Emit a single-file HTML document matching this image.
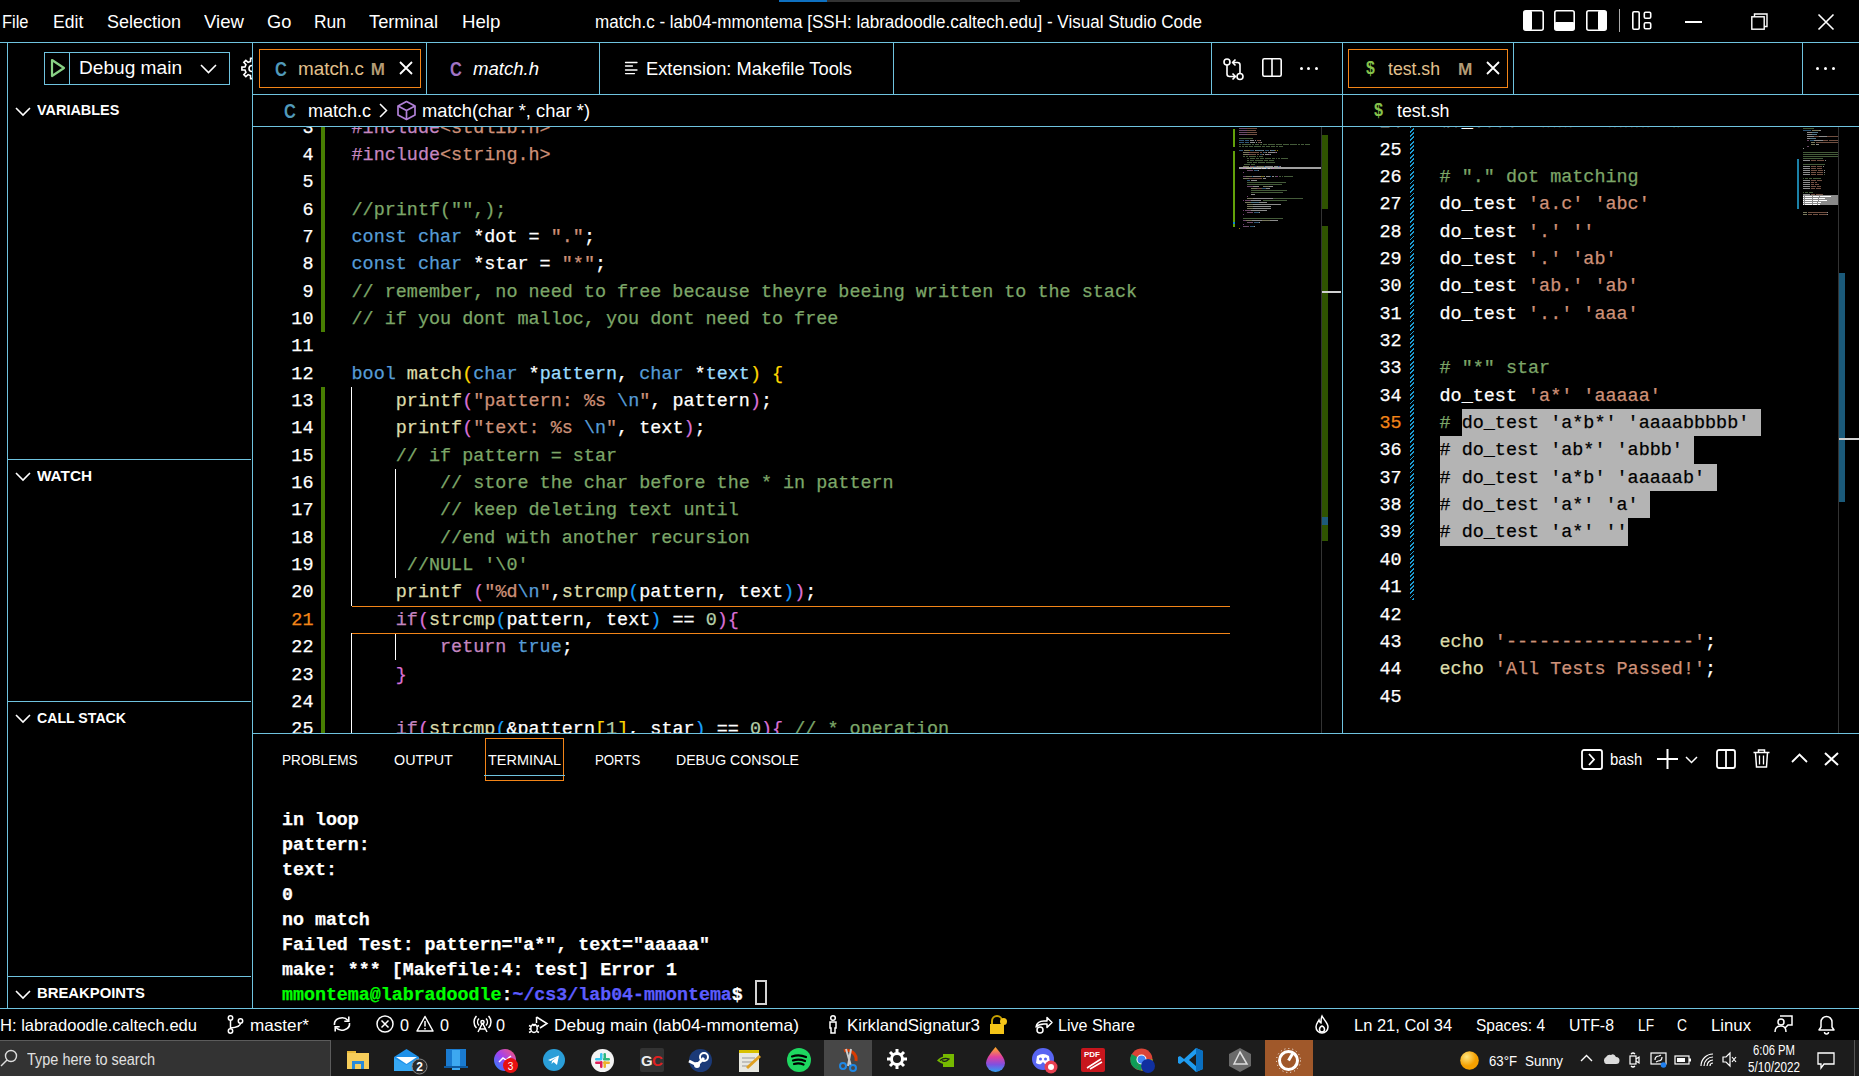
<!DOCTYPE html><html><head><meta charset="utf-8"><style>
html,body{margin:0;padding:0;background:#000;}
body{width:1859px;height:1076px;position:relative;overflow:hidden;}
.t{position:absolute;white-space:pre;line-height:1;}
.r{position:absolute;}
svg.r{overflow:visible;}
.m{position:absolute;white-space:pre;font-family:"Liberation Mono",monospace;line-height:1;color:#fff;-webkit-text-stroke:0.25px currentColor;}
.tb{font-size:18.3px;font-weight:700;}
</style></head><body>
<div class="r" style="left:779.00px;top:0.00px;width:48.00px;height:1.50px;background:#0E70C0;"></div>
<div class="r" style="left:827.00px;top:0.00px;width:193.00px;height:1.50px;background:#333;"></div>
<div class="t" style="left:2.00px;top:12.94px;font-size:18.50px;color:#fff;font-family:'Liberation Sans', sans-serif;font-weight:400;transform:scaleX(0.8897);transform-origin:0 0;">File</div>
<div class="t" style="left:52.70px;top:12.94px;font-size:18.50px;color:#fff;font-family:'Liberation Sans', sans-serif;font-weight:400;transform:scaleX(0.9495);transform-origin:0 0;">Edit</div>
<div class="t" style="left:107.00px;top:12.94px;font-size:18.50px;color:#fff;font-family:'Liberation Sans', sans-serif;font-weight:400;transform:scaleX(0.9721);transform-origin:0 0;">Selection</div>
<div class="t" style="left:204.00px;top:12.94px;font-size:18.50px;color:#fff;font-family:'Liberation Sans', sans-serif;font-weight:400;transform:scaleX(1.0057);transform-origin:0 0;">View</div>
<div class="t" style="left:266.70px;top:12.94px;font-size:18.50px;color:#fff;font-family:'Liberation Sans', sans-serif;font-weight:400;transform:scaleX(0.9839);transform-origin:0 0;">Go</div>
<div class="t" style="left:314.00px;top:12.94px;font-size:18.50px;color:#fff;font-family:'Liberation Sans', sans-serif;font-weight:400;transform:scaleX(0.9426);transform-origin:0 0;">Run</div>
<div class="t" style="left:369.00px;top:12.94px;font-size:18.50px;color:#fff;font-family:'Liberation Sans', sans-serif;font-weight:400;transform:scaleX(0.9867);transform-origin:0 0;">Terminal</div>
<div class="t" style="left:461.70px;top:12.94px;font-size:18.50px;color:#fff;font-family:'Liberation Sans', sans-serif;font-weight:400;transform:scaleX(1.0074);transform-origin:0 0;">Help</div>
<div class="t" style="left:595.00px;top:13.78px;font-size:17.50px;color:#fff;font-family:'Liberation Sans', sans-serif;font-weight:400;transform:scaleX(0.9740);transform-origin:0 0;">match.c - lab04-mmontema [SSH: labradoodle.caltech.edu] - Visual Studio Code</div>
<svg class="r" style="left:1523.00px;top:10.00px;" width="21" height="21" viewBox="0 0 21 21"><rect x="0.8" y="0.8" width="19.4" height="19.4" rx="2" fill="none" stroke="#fff" stroke-width="1.6"/><rect x="1" y="1" width="8" height="19" rx="1" fill="#fff"/></svg>
<svg class="r" style="left:1554.00px;top:10.00px;" width="21" height="21" viewBox="0 0 21 21"><rect x="0.8" y="0.8" width="19.4" height="19.4" rx="2" fill="none" stroke="#fff" stroke-width="1.6"/><rect x="1" y="12" width="19" height="8" rx="1" fill="#fff"/></svg>
<svg class="r" style="left:1586.00px;top:10.00px;" width="21" height="21" viewBox="0 0 21 21"><rect x="0.8" y="0.8" width="19.4" height="19.4" rx="2" fill="none" stroke="#fff" stroke-width="1.6"/><rect x="12" y="1" width="8" height="19" rx="1" fill="#fff"/></svg>
<div class="r" style="left:1618.50px;top:9.00px;width:1.50px;height:23.00px;background:#aaa;"></div>
<svg class="r" style="left:1632.00px;top:11.00px;" width="20" height="19" viewBox="0 0 20 19"><rect x="0.8" y="0.8" width="6.4" height="17.4" rx="1.2" fill="none" stroke="#fff" stroke-width="1.6"/><rect x="12.3" y="1.3" width="6.4" height="6" rx="1.2" fill="none" stroke="#fff" stroke-width="1.6"/><rect x="12.3" y="11.8" width="6.4" height="6" rx="1.2" fill="none" stroke="#fff" stroke-width="1.6"/></svg>
<div class="r" style="left:1685.00px;top:21.00px;width:17.00px;height:1.60px;background:#fff;"></div>
<svg class="r" style="left:1751.00px;top:13.00px;" width="19" height="18" viewBox="0 0 19 18"><rect x="0.8" y="3.8" width="12.4" height="12.4" fill="none" stroke="#fff" stroke-width="1.4"/><path d="M3.5 3.8V1H16V13.5H13.2" fill="none" stroke="#fff" stroke-width="1.4"/></svg>
<svg class="r" style="left:1818.00px;top:14.00px;" width="16" height="16" viewBox="0 0 16 16"><path d="M0.5 0.5L15.5 15.5M15.5 0.5L0.5 15.5" stroke="#fff" stroke-width="1.6"/></svg>
<div class="r" style="left:0.00px;top:42.00px;width:1859.00px;height:1.00px;background:#6FC3DF;"></div>
<div class="r" style="left:7.00px;top:42.00px;width:1.00px;height:966.00px;background:#6FC3DF;"></div>
<div class="r" style="left:252.00px;top:42.00px;width:1.00px;height:966.00px;background:#6FC3DF;"></div>
<div class="r" style="left:0.00px;top:1008.00px;width:1859.00px;height:1.00px;background:#6FC3DF;"></div>
<div class="r" style="left:44.00px;top:52.00px;width:186.00px;height:33.00px;box-sizing:border-box;border:1px solid #6FC3DF;"></div>
<div class="r" style="left:69.00px;top:53.00px;width:1.00px;height:31.00px;background:#6FC3DF;"></div>
<svg class="r" style="left:50.00px;top:58.00px;" width="16" height="20" viewBox="0 0 16 20"><path d="M2 2L14 10L2 18Z" fill="none" stroke="#89D185" stroke-width="2.2" stroke-linejoin="round"/></svg>
<div class="t" style="left:79.00px;top:59.04px;font-size:18.50px;color:#fff;font-family:'Liberation Sans', sans-serif;font-weight:400;transform:scaleX(1.0329);transform-origin:0 0;">Debug main</div>
<svg class="r" style="left:200.00px;top:64.00px;" width="17" height="10" viewBox="0 0 17 10"><path d="M1 1L8.5 8.5L16 1" fill="none" stroke="#fff" stroke-width="1.6"/></svg>
<div class="r" style="left:230px;top:55px;width:22px;height:30px;overflow:hidden">
<svg class="r" style="left:0.00px;top:0.00px;" width="30" height="30" viewBox="0 0 30 30"><g fill="none" stroke="#fff" stroke-width="1.6" stroke-linejoin="miter"><path d="M29.03 11.96 L32.10 12.10 L32.10 14.90 L29.03 15.04 L28.06 17.38 L30.13 19.66 L28.16 21.63 L25.88 19.56 L23.54 20.53 L23.40 23.60 L20.60 23.60 L20.46 20.53 L18.12 19.56 L15.84 21.63 L13.87 19.66 L15.94 17.38 L14.97 15.04 L11.90 14.90 L11.90 12.10 L14.97 11.96 L15.94 9.62 L13.87 7.34 L15.84 5.37 L18.12 7.44 L20.46 6.47 L20.60 3.40 L23.40 3.40 L23.54 6.47 L25.88 7.44 L28.16 5.37 L30.13 7.34 L28.06 9.62Z"/><circle cx="22" cy="13.5" r="3"/></g></svg>
</div>
<svg class="r" style="left:15.00px;top:106.50px;" width="16" height="9" viewBox="0 0 16 9"><path d="M1 1L8 8L15 1" fill="none" stroke="#fff" stroke-width="1.6"/></svg>
<div class="t" style="left:37.40px;top:103.22px;font-size:14.50px;color:#fff;font-family:'Liberation Sans', sans-serif;font-weight:700;transform:scaleX(0.9949);transform-origin:0 0;">VARIABLES</div>
<div class="r" style="left:8.00px;top:459.00px;width:243.00px;height:1.00px;background:#6FC3DF;"></div>
<svg class="r" style="left:15.00px;top:472.00px;" width="16" height="9" viewBox="0 0 16 9"><path d="M1 1L8 8L15 1" fill="none" stroke="#fff" stroke-width="1.6"/></svg>
<div class="t" style="left:37.40px;top:468.72px;font-size:14.50px;color:#fff;font-family:'Liberation Sans', sans-serif;font-weight:700;transform:scaleX(1.0566);transform-origin:0 0;">WATCH</div>
<div class="r" style="left:8.00px;top:701.00px;width:243.00px;height:1.00px;background:#6FC3DF;"></div>
<svg class="r" style="left:15.00px;top:714.00px;" width="16" height="9" viewBox="0 0 16 9"><path d="M1 1L8 8L15 1" fill="none" stroke="#fff" stroke-width="1.6"/></svg>
<div class="t" style="left:37.40px;top:710.72px;font-size:14.50px;color:#fff;font-family:'Liberation Sans', sans-serif;font-weight:700;transform:scaleX(0.9750);transform-origin:0 0;">CALL STACK</div>
<div class="r" style="left:8.00px;top:976.00px;width:243.00px;height:1.00px;background:#6FC3DF;"></div>
<svg class="r" style="left:15.00px;top:989.70px;" width="16" height="9" viewBox="0 0 16 9"><path d="M1 1L8 8L15 1" fill="none" stroke="#fff" stroke-width="1.6"/></svg>
<div class="t" style="left:37.40px;top:986.42px;font-size:14.50px;color:#fff;font-family:'Liberation Sans', sans-serif;font-weight:700;transform:scaleX(1.0231);transform-origin:0 0;">BREAKPOINTS</div>
<div class="r" style="left:253.00px;top:94.00px;width:1089.00px;height:1.00px;background:#6FC3DF;"></div>
<div class="r" style="left:253.00px;top:126.00px;width:1089.00px;height:1.00px;background:#6FC3DF;"></div>
<div class="r" style="left:426.00px;top:42.00px;width:1.00px;height:52.00px;background:#6FC3DF;"></div>
<div class="r" style="left:599.00px;top:42.00px;width:1.00px;height:52.00px;background:#6FC3DF;"></div>
<div class="r" style="left:893.00px;top:42.00px;width:1.00px;height:52.00px;background:#6FC3DF;"></div>
<div class="r" style="left:1211.00px;top:42.00px;width:1.00px;height:52.00px;background:#6FC3DF;"></div>
<div class="r" style="left:1342.00px;top:42.00px;width:1.00px;height:691.00px;background:#6FC3DF;"></div>
<div class="r" style="left:259.00px;top:49.00px;width:162.00px;height:39.00px;box-sizing:border-box;border:1px solid #F38518;"></div>
<div class="t" style="left:275.20px;top:58.57px;font-size:20.00px;color:#519ABA;font-family:'Liberation Sans', sans-serif;font-weight:700;transform:scaleX(0.8194);transform-origin:0 0;">C</div>
<div class="t" style="left:298.00px;top:60.34px;font-size:18.50px;color:#E2C08D;font-family:'Liberation Sans', sans-serif;font-weight:400;transform:scaleX(1.0193);transform-origin:0 0;">match.c</div>
<div class="t" style="left:370.80px;top:61.11px;font-size:17.00px;color:#B39B74;font-family:'Liberation Sans', sans-serif;font-weight:700;">M</div>
<svg class="r" style="left:399.00px;top:61.00px;" width="14" height="14" viewBox="0 0 14 14"><path d="M1 1L13 13M13 1L1 13" stroke="#fff" stroke-width="1.8"/></svg>
<div class="t" style="left:450.00px;top:58.57px;font-size:20.00px;color:#A074C4;font-family:'Liberation Sans', sans-serif;font-weight:700;transform:scaleX(0.8194);transform-origin:0 0;">C</div>
<div class="t" style="left:473.00px;top:60.34px;font-size:18.50px;color:#fff;font-family:'Liberation Sans', sans-serif;font-weight:400;font-style:italic;transform:scaleX(1.0035);transform-origin:0 0;">match.h</div>
<svg class="r" style="left:625.00px;top:61.00px;" width="13" height="14" viewBox="0 0 13 14"><path d="M0.5 1.5H12M0.5 5H7.5M0.5 9H12M0.5 12.6H9.5" stroke="#fff" stroke-width="1.3" stroke-linecap="round"/></svg>
<div class="t" style="left:646.00px;top:60.34px;font-size:18.50px;color:#fff;font-family:'Liberation Sans', sans-serif;font-weight:400;transform:scaleX(0.9885);transform-origin:0 0;">Extension: Makefile Tools</div>
<svg class="r" style="left:1220.00px;top:55.00px;" width="26" height="28" viewBox="0 0 26 28"><g fill="none" stroke="#fff" stroke-width="1.6" stroke-linejoin="round"><circle cx="7" cy="7" r="3"/><circle cx="20" cy="21.5" r="3"/><path d="M7 10V19Q7 21.5 9.5 21.5H15M12.5 18.5L15.5 21.5L12.5 24.5"/><path d="M20 18.5V10Q20 7.5 17.5 7.5H12.5M15.5 4.5L12.5 7.5L15.5 10.5"/></g></svg>
<svg class="r" style="left:1262.00px;top:58.00px;" width="20" height="19" viewBox="0 0 20 19"><rect x="0.8" y="0.8" width="18.4" height="17.4" rx="1.5" fill="none" stroke="#fff" stroke-width="1.6"/><path d="M10 1V18" stroke="#fff" stroke-width="1.6"/></svg>
<div class="r" style="left:1299.50px;top:67.00px;width:3.00px;height:3.00px;background:#fff;border-radius:50%;"></div>
<div class="r" style="left:1307.00px;top:67.00px;width:3.00px;height:3.00px;background:#fff;border-radius:50%;"></div>
<div class="r" style="left:1314.50px;top:67.00px;width:3.00px;height:3.00px;background:#fff;border-radius:50%;"></div>
<div class="t" style="left:284.20px;top:100.57px;font-size:20.00px;color:#519ABA;font-family:'Liberation Sans', sans-serif;font-weight:700;transform:scaleX(0.8194);transform-origin:0 0;">C</div>
<div class="t" style="left:308.00px;top:102.34px;font-size:18.50px;color:#fff;font-family:'Liberation Sans', sans-serif;font-weight:400;transform:scaleX(0.9730);transform-origin:0 0;">match.c</div>
<svg class="r" style="left:379.00px;top:103.00px;" width="9" height="15" viewBox="0 0 9 15"><path d="M1 1L7.5 7.5L1 14" fill="none" stroke="#fff" stroke-width="1.5"/></svg>
<svg class="r" style="left:396.00px;top:100.00px;" width="21" height="21" viewBox="0 0 21 21"><g fill="none" stroke="#B180D7" stroke-width="1.7" stroke-linejoin="round"><path d="M10.5 1.5L19 6V15L10.5 19.5L2 15V6Z"/><path d="M2 6L10.5 10.5L19 6M10.5 10.5V19.5"/></g></svg>
<div class="t" style="left:422.00px;top:102.34px;font-size:18.50px;color:#fff;font-family:'Liberation Sans', sans-serif;font-weight:400;transform:scaleX(0.9903);transform-origin:0 0;">match(char *, char *)</div>
<div class="r" style="left:1343.00px;top:94.00px;width:516.00px;height:1.00px;background:#6FC3DF;"></div>
<div class="r" style="left:1343.00px;top:126.00px;width:516.00px;height:1.00px;background:#6FC3DF;"></div>
<div class="r" style="left:1513.00px;top:42.00px;width:1.00px;height:52.00px;background:#6FC3DF;"></div>
<div class="r" style="left:1802.00px;top:42.00px;width:1.00px;height:52.00px;background:#6FC3DF;"></div>
<div class="r" style="left:1348.00px;top:49.00px;width:160.00px;height:39.00px;box-sizing:border-box;border:1px solid #F38518;"></div>
<div class="t" style="left:1365.70px;top:58.41px;font-size:19.00px;color:#86C24B;font-family:'Liberation Sans', sans-serif;font-weight:700;transform:scaleX(0.8345);transform-origin:0 0;">$</div>
<div class="t" style="left:1388.00px;top:60.34px;font-size:18.50px;color:#E2C08D;font-family:'Liberation Sans', sans-serif;font-weight:400;transform:scaleX(0.9544);transform-origin:0 0;">test.sh</div>
<div class="t" style="left:1457.80px;top:61.11px;font-size:17.00px;color:#B39B74;font-family:'Liberation Sans', sans-serif;font-weight:700;transform:scaleX(1.0144);transform-origin:0 0;">M</div>
<svg class="r" style="left:1486.00px;top:61.00px;" width="14" height="14" viewBox="0 0 14 14"><path d="M1 1L13 13M13 1L1 13" stroke="#fff" stroke-width="1.8"/></svg>
<div class="r" style="left:1815.50px;top:67.00px;width:3.00px;height:3.00px;background:#fff;border-radius:50%;"></div>
<div class="r" style="left:1823.50px;top:67.00px;width:3.00px;height:3.00px;background:#fff;border-radius:50%;"></div>
<div class="r" style="left:1831.50px;top:67.00px;width:3.00px;height:3.00px;background:#fff;border-radius:50%;"></div>
<div class="t" style="left:1374.00px;top:100.41px;font-size:19.00px;color:#86C24B;font-family:'Liberation Sans', sans-serif;font-weight:700;transform:scaleX(0.8535);transform-origin:0 0;">$</div>
<div class="t" style="left:1396.50px;top:102.34px;font-size:18.50px;color:#fff;font-family:'Liberation Sans', sans-serif;font-weight:400;transform:scaleX(0.9636);transform-origin:0 0;">test.sh</div>
<div class="r" style="left:253.00px;top:733.00px;width:1606.00px;height:1.00px;background:#6FC3DF;"></div>
<div class="t" style="left:282.40px;top:751.88px;font-size:15.50px;color:#fff;font-family:'Liberation Sans', sans-serif;font-weight:400;transform:scaleX(0.8780);transform-origin:0 0;">PROBLEMS</div>
<div class="t" style="left:393.70px;top:751.88px;font-size:15.50px;color:#fff;font-family:'Liberation Sans', sans-serif;font-weight:400;transform:scaleX(0.9230);transform-origin:0 0;">OUTPUT</div>
<div class="t" style="left:488.00px;top:751.88px;font-size:15.50px;color:#fff;font-family:'Liberation Sans', sans-serif;font-weight:400;transform:scaleX(0.9317);transform-origin:0 0;">TERMINAL</div>
<div class="t" style="left:595.40px;top:751.88px;font-size:15.50px;color:#fff;font-family:'Liberation Sans', sans-serif;font-weight:400;transform:scaleX(0.8533);transform-origin:0 0;">PORTS</div>
<div class="t" style="left:676.00px;top:751.88px;font-size:15.50px;color:#fff;font-family:'Liberation Sans', sans-serif;font-weight:400;transform:scaleX(0.9095);transform-origin:0 0;">DEBUG CONSOLE</div>
<div class="r" style="left:485.00px;top:738.00px;width:79.00px;height:43.00px;box-sizing:border-box;border:1px solid #F38518;"></div>
<div class="r" style="left:484.00px;top:775.00px;width:81.00px;height:1.00px;background:#6FC3DF;"></div>
<svg class="r" style="left:1581.00px;top:749.00px;" width="22" height="21" viewBox="0 0 22 21"><rect x="1" y="1" width="20" height="19" rx="2" fill="none" stroke="#fff" stroke-width="1.8"/><path d="M8 5L13 10.5L8 16" fill="none" stroke="#fff" stroke-width="1.8"/></svg>
<div class="t" style="left:1609.70px;top:751.11px;font-size:17.00px;color:#fff;font-family:'Liberation Sans', sans-serif;font-weight:400;transform:scaleX(0.8756);transform-origin:0 0;">bash</div>
<svg class="r" style="left:1657.00px;top:749.00px;" width="21" height="20" viewBox="0 0 21 20"><path d="M10.5 0V20M0 10H21" stroke="#fff" stroke-width="2"/></svg>
<svg class="r" style="left:1685.00px;top:756.00px;" width="13" height="8" viewBox="0 0 13 8"><path d="M1 1L6.5 6.5L12 1" fill="none" stroke="#fff" stroke-width="1.5"/></svg>
<svg class="r" style="left:1716.00px;top:749.00px;" width="19" height="19" viewBox="0 0 19 19"><rect x="1" y="1" width="18" height="18" rx="2" fill="none" stroke="#fff" stroke-width="1.8"/><path d="M10 1V19" stroke="#fff" stroke-width="1.8"/></svg>
<svg class="r" style="left:1753.00px;top:749.00px;" width="17" height="19" viewBox="0 0 17 19"><g fill="none" stroke="#fff" stroke-width="1.5"><path d="M0.5 3.5H16.5M5.5 3.5V1H11.5V3.5M2.5 3.5L3.5 18H13.5L14.5 3.5"/><path d="M6.5 6.5V15.5M10.5 6.5V15.5" stroke-width="1.3"/></g></svg>
<svg class="r" style="left:1791.00px;top:753.00px;" width="17" height="10" viewBox="0 0 17 10"><path d="M1 9L8.5 1.5L16 9" fill="none" stroke="#fff" stroke-width="1.8"/></svg>
<svg class="r" style="left:1824.00px;top:752.00px;" width="15" height="14" viewBox="0 0 15 14"><path d="M1 1L14 13M14 1L1 13" stroke="#fff" stroke-width="2"/></svg>
<div class="m tb" style="left:282px;top:810.98px">in loop</div>
<div class="m tb" style="left:282px;top:835.98px">pattern:</div>
<div class="m tb" style="left:282px;top:860.98px">text:</div>
<div class="m tb" style="left:282px;top:885.98px">0</div>
<div class="m tb" style="left:282px;top:910.98px">no match</div>
<div class="m tb" style="left:282px;top:935.98px">Failed Test: pattern=&quot;a*&quot;, text=&quot;aaaaa&quot;</div>
<div class="m tb" style="left:282px;top:960.98px">make: *** [Makefile:4: test] Error 1</div>
<div class="m tb" style="left:282px;top:985.98px"><span style="color:#00FF00">mmontema@labradoodle</span>:<span style="color:#5C5CFF">~/cs3/lab04-mmontema</span>$ </div>
<div class="r" style="left:754.50px;top:980.00px;width:12.00px;height:24.50px;box-sizing:border-box;border:2px solid #d4d4d4;"></div>
<div class="t" style="left:0.00px;top:1016.73px;font-size:16.50px;color:#fff;font-family:'Liberation Sans', sans-serif;font-weight:400;transform:scaleX(1.0037);transform-origin:0 0;">H: labradoodle.caltech.edu</div>
<div class="t" style="left:250.00px;top:1016.73px;font-size:16.50px;color:#fff;font-family:'Liberation Sans', sans-serif;font-weight:400;transform:scaleX(1.0380);transform-origin:0 0;">master*</div>
<div class="t" style="left:554.00px;top:1016.73px;font-size:16.50px;color:#fff;font-family:'Liberation Sans', sans-serif;font-weight:400;transform:scaleX(1.0516);transform-origin:0 0;">Debug main (lab04-mmontema)</div>
<div class="t" style="left:400.00px;top:1016.73px;font-size:16.50px;color:#fff;font-family:'Liberation Sans', sans-serif;font-weight:400;transform:scaleX(0.9828);transform-origin:0 0;">0</div>
<div class="t" style="left:440.00px;top:1016.73px;font-size:16.50px;color:#fff;font-family:'Liberation Sans', sans-serif;font-weight:400;transform:scaleX(0.9828);transform-origin:0 0;">0</div>
<div class="t" style="left:496.00px;top:1016.73px;font-size:16.50px;color:#fff;font-family:'Liberation Sans', sans-serif;font-weight:400;transform:scaleX(0.9828);transform-origin:0 0;">0</div>
<div class="t" style="left:847.00px;top:1016.73px;font-size:16.50px;color:#fff;font-family:'Liberation Sans', sans-serif;font-weight:400;transform:scaleX(1.0210);transform-origin:0 0;">KirklandSignatur3</div>
<div class="t" style="left:1058.00px;top:1016.73px;font-size:16.50px;color:#fff;font-family:'Liberation Sans', sans-serif;font-weight:400;transform:scaleX(0.9763);transform-origin:0 0;">Live Share</div>
<div class="t" style="left:1354.00px;top:1016.73px;font-size:16.50px;color:#fff;font-family:'Liberation Sans', sans-serif;font-weight:400;">Ln 21, Col 34</div>
<div class="t" style="left:1476.00px;top:1016.73px;font-size:16.50px;color:#fff;font-family:'Liberation Sans', sans-serif;font-weight:400;transform:scaleX(0.9408);transform-origin:0 0;">Spaces: 4</div>
<div class="t" style="left:1569.00px;top:1016.73px;font-size:16.50px;color:#fff;font-family:'Liberation Sans', sans-serif;font-weight:400;transform:scaleX(0.9620);transform-origin:0 0;">UTF-8</div>
<div class="t" style="left:1638.00px;top:1016.73px;font-size:16.50px;color:#fff;font-family:'Liberation Sans', sans-serif;font-weight:400;transform:scaleX(0.8324);transform-origin:0 0;">LF</div>
<div class="t" style="left:1677.00px;top:1016.73px;font-size:16.50px;color:#fff;font-family:'Liberation Sans', sans-serif;font-weight:400;transform:scaleX(0.8418);transform-origin:0 0;">C</div>
<div class="t" style="left:1711.00px;top:1016.73px;font-size:16.50px;color:#fff;font-family:'Liberation Sans', sans-serif;font-weight:400;transform:scaleX(1.0143);transform-origin:0 0;">Linux</div>
<svg class="r" style="left:227.00px;top:1015.00px;" width="17" height="19" viewBox="0 0 17 19"><g fill="none" stroke="#fff" stroke-width="1.5"><circle cx="3.5" cy="3" r="2.2"/><circle cx="3.5" cy="16" r="2.2"/><circle cx="13.5" cy="6" r="2.2"/><path d="M3.5 5.2V13.8M13.5 8.2Q13.5 12 3.5 13"/></g></svg>
<svg class="r" style="left:332.00px;top:1016.00px;" width="20" height="16" viewBox="0 0 20 16"><g fill="none" stroke="#fff" stroke-width="1.6"><path d="M2.5 9A7.5 6.5 0 0 1 16 4.5"/><path d="M17.5 7A7.5 6.5 0 0 1 4 11.5"/><path d="M16.8 0.5V5.2H12.3" stroke-linejoin="miter"/><path d="M3.2 15.5V10.8H7.7"/></g></svg>
<svg class="r" style="left:376.00px;top:1015.00px;" width="18" height="18" viewBox="0 0 18 18"><g fill="none" stroke="#fff" stroke-width="1.5"><circle cx="9" cy="9" r="8"/><path d="M5.5 5.5L12.5 12.5M12.5 5.5L5.5 12.5"/></g></svg>
<svg class="r" style="left:416.00px;top:1015.00px;" width="18" height="17" viewBox="0 0 18 17"><g fill="none" stroke="#fff" stroke-width="1.5"><path d="M9 1.5L17 16H1Z" stroke-linejoin="round"/><path d="M9 6V11.5M9 13V14.5"/></g></svg>
<svg class="r" style="left:474.00px;top:1015.00px;" width="17" height="18" viewBox="0 0 17 18"><g fill="none" stroke="#fff" stroke-width="1.5"><path d="M8.5 8L4 17M8.5 8L13 17M5.5 14H11.5"/><circle cx="8.5" cy="7" r="1.6"/><path d="M5 3.5A5 5 0 0 0 5 10.5M12 3.5A5 5 0 0 1 12 10.5M2.5 1A8.5 8.5 0 0 0 2.5 13M14.5 1A8.5 8.5 0 0 1 14.5 13"/></g></svg>
<svg class="r" style="left:528.00px;top:1016.00px;" width="20" height="18" viewBox="0 0 20 18"><g fill="none" stroke="#fff" stroke-width="1.5"><path d="M8.5 1L19 7.5L12 12"/><path d="M8.5 1V7"/><ellipse cx="6" cy="12.5" rx="3.2" ry="4"/><path d="M1 9.5L3 10.5M1 13H3M1 16.5L3 15.5M11 9.5L9 10.5M11 16.5L9 15.5M4 8L6 9.5L8 8"/></g></svg>
<svg class="r" style="left:828.00px;top:1015.00px;" width="10" height="19" viewBox="0 0 10 19"><g fill="none" stroke="#fff" stroke-width="1.5"><circle cx="5" cy="3" r="2.3"/><path d="M2 7H8V13H7V18H3V13H2Z"/></g></svg>
<svg class="r" style="left:989.00px;top:1016.00px;" width="19" height="18" viewBox="0 0 19 18"><path d="M3 8V5A5 5 0 0 1 13 5V8" fill="none" stroke="#C8A200" stroke-width="2"/><rect x="1" y="8" width="14" height="10" fill="#F5C518"/><circle cx="14.5" cy="5.5" r="3.5" fill="#F5C518"/></svg>
<svg class="r" style="left:1034.00px;top:1016.00px;" width="19" height="18" viewBox="0 0 19 18"><g fill="none" stroke="#fff" stroke-width="1.5"><path d="M2 11Q3 5 10 5H13V1.5L18 6.5L13 11.5V8H10Q5 8 2 11Z" stroke-linejoin="round"/><circle cx="6" cy="14" r="3"/></g></svg>
<svg class="r" style="left:1315.00px;top:1015.00px;" width="14" height="18" viewBox="0 0 14 18"><g fill="none" stroke="#fff" stroke-width="1.5"><path d="M7 1C9 5 13 8 13 12A6 6 0 0 1 1 12C1 9 3 7 4 5C5 8 6 8 6 8C6 6 6 3 7 1Z"/><path d="M7 17A2.5 2.5 0 0 1 4.5 14.5C4.5 12 7 11 7 11C7 11 9.5 12 9.5 14.5A2.5 2.5 0 0 1 7 17Z"/></g></svg>
<svg class="r" style="left:1774.00px;top:1015.00px;" width="19" height="18" viewBox="0 0 19 18"><g fill="none" stroke="#fff" stroke-width="1.5"><path d="M6 1H18V10H14L11 13"/><circle cx="7" cy="7" r="3"/><path d="M1 17Q1 11 7 11Q12 11 12 17"/></g></svg>
<svg class="r" style="left:1818.00px;top:1015.00px;" width="17" height="19" viewBox="0 0 17 19"><g fill="none" stroke="#fff" stroke-width="1.5"><path d="M8.5 1.5A5.5 5.5 0 0 0 3 7V12L1 15H16L14 12V7A5.5 5.5 0 0 0 8.5 1.5Z" stroke-linejoin="round"/><path d="M6.5 17A2 2 0 0 0 10.5 17"/></g></svg>
<div class="r" style="left:0.00px;top:1040.00px;width:1859.00px;height:36.00px;background:#1C1C1C;"></div>
<div class="r" style="left:0.00px;top:1040.00px;width:331.00px;height:36.00px;background:#333333;box-sizing:border-box;border-top:1px solid #5c5c5c;border-right:1px solid #5c5c5c;"></div>
<div class="t" style="left:27.00px;top:1052.45px;font-size:16.00px;color:#e0e0e0;font-family:'Liberation Sans', sans-serif;font-weight:400;transform:scaleX(0.9050);transform-origin:0 0;">Type here to search</div>
<svg class="r" style="left:1.00px;top:1049.00px;" width="16" height="18" viewBox="0 0 16 18"><g fill="none" stroke="#ddd" stroke-width="1.4"><circle cx="10" cy="7" r="5.5"/><path d="M6 11L0 17"/></g></svg>
<div class="r" style="left:824.00px;top:1040.00px;width:48.00px;height:36.00px;background:#474747;"></div>
<div class="r" style="left:1265.00px;top:1040.00px;width:48.00px;height:36.00px;background:#A0582A;"></div>
<svg class="r" style="left:347.00px;top:1050.00px;" width="22" height="19" viewBox="0 0 22 19"><rect x="0" y="1" width="9" height="4" fill="#E8B838"/><rect x="0" y="3" width="22" height="16" fill="#F6CD5A"/><rect x="5" y="11" width="12" height="8" fill="#2A8AD8"/><rect x="8" y="14" width="6" height="5" fill="#F6CD5A"/></svg>
<svg class="r" style="left:394.00px;top:1049.00px;" width="25" height="22" viewBox="0 0 25 22"><path d="M0 8L12.5 0L25 8V22H0Z" fill="#1E90E8"/><path d="M2 8H23L12.5 15Z" fill="#fff"/><path d="M0 9L12.5 16L25 9V22H0Z" fill="#36A8F4"/></svg>
<svg class="r" style="left:411.00px;top:1058.00px;" width="17" height="17" viewBox="0 0 17 17"><circle cx="8.5" cy="8.5" r="7.5" fill="#2A2A2A" stroke="#888" stroke-width="1"/><text x="8.5" y="13" font-size="12" font-family="Liberation Sans" font-weight="700" fill="#fff" text-anchor="middle">2</text></svg>
<svg class="r" style="left:444.00px;top:1049.00px;" width="24" height="22" viewBox="0 0 24 22"><rect x="2" y="0" width="20" height="18" fill="#1A7BD0"/><rect x="8" y="1" width="8" height="20" fill="#3DA8F0"/><rect x="0" y="17" width="24" height="2" fill="#0E5AA0"/></svg>
<svg class="r" style="left:494.00px;top:1049.00px;" width="22" height="22" viewBox="0 0 22 22"><defs><linearGradient id="msg" x1="0" y1="1" x2="1" y2="0"><stop offset="0" stop-color="#1A8CFF"/><stop offset=".5" stop-color="#A040F0"/><stop offset="1" stop-color="#FF5A70"/></linearGradient></defs><circle cx="11" cy="11" r="11" fill="url(#msg)"/><path d="M5 13L9 9L12 11L17 7" stroke="#fff" stroke-width="1.5" fill="none"/></svg>
<svg class="r" style="left:503.00px;top:1058.00px;" width="15" height="15" viewBox="0 0 15 15"><circle cx="7.5" cy="7.5" r="7.5" fill="#E81010"/><text x="7.5" y="11.5" font-size="10" font-family="Liberation Sans" fill="#fff" text-anchor="middle">3</text></svg>
<svg class="r" style="left:543.00px;top:1049.00px;" width="22" height="22" viewBox="0 0 22 22"><circle cx="11" cy="11" r="11" fill="#2A9ED8"/><path d="M5 11L16 6.5L14 16L10.5 13L8.5 15L9 12L14 8L7.5 12Z" fill="#fff"/></svg>
<svg class="r" style="left:591.00px;top:1049.00px;" width="23" height="23" viewBox="0 0 23 23"><circle cx="11.5" cy="11.5" r="11.5" fill="#f4f4f4"/><rect x="9" y="4" width="2.5" height="7" rx="1.2" fill="#36C5F0"/><rect x="4" y="9" width="7" height="2.5" rx="1.2" fill="#36C5F0"/><rect x="12.5" y="4" width="2.5" height="7" rx="1.2" fill="#2EB67D"/><rect x="12" y="9" width="7" height="2.5" rx="1.2" fill="#2EB67D"/><rect x="12.5" y="12" width="2.5" height="7" rx="1.2" fill="#ECB22E"/><rect x="12" y="12.5" width="7" height="2.5" rx="1.2" fill="#ECB22E"/><rect x="9" y="12" width="2.5" height="7" rx="1.2" fill="#E01E5A"/><rect x="4" y="12.5" width="7" height="2.5" rx="1.2" fill="#E01E5A"/></svg>
<svg class="r" style="left:640.00px;top:1048.00px;" width="24" height="24" viewBox="0 0 24 24"><rect width="24" height="24" rx="2" fill="#333"/><text x="1" y="18" font-size="15" font-family="Liberation Sans" font-weight="700" fill="#eee">G</text><text x="12" y="18" font-size="15" font-family="Liberation Sans" font-weight="700" fill="#E02020">C</text></svg>
<svg class="r" style="left:689.00px;top:1049.00px;" width="23" height="23" viewBox="0 0 23 23"><circle cx="11.5" cy="11.5" r="11.5" fill="#1B3A78"/><circle cx="15" cy="8" r="4" fill="none" stroke="#fff" stroke-width="2"/><path d="M0 12L8 16L15 9" stroke="#fff" stroke-width="3" fill="none"/><circle cx="8" cy="16" r="3" fill="#fff"/></svg>
<svg class="r" style="left:738.00px;top:1049.00px;" width="24" height="23" viewBox="0 0 24 23"><rect x="1" y="2" width="20" height="21" fill="#E8E8E0"/><rect x="1" y="1" width="20" height="3" fill="#D8C000"/><path d="M4 9H17M4 13H15M4 17H12" stroke="#999" stroke-width="1"/><path d="M9 19L22 7" stroke="#E0A020" stroke-width="3"/></svg>
<svg class="r" style="left:787.00px;top:1048.00px;" width="24" height="24" viewBox="0 0 24 24"><circle cx="12" cy="12" r="12" fill="#1ED760"/><path d="M5 8.5Q12 6 19 9M6 12.5Q12 10.5 18 13M7 16Q12 14.5 16.5 16.5" stroke="#000" stroke-width="2.2" fill="none" stroke-linecap="round"/></svg>
<svg class="r" style="left:838.00px;top:1048.00px;" width="21" height="23" viewBox="0 0 21 23"><path d="M6 3A9 9 0 0 1 18 13" stroke="#D83B01" stroke-width="3" fill="none"/><path d="M8 1L13 18M13 1L10 18" stroke="#ccc" stroke-width="2"/><circle cx="5" cy="18" r="3" fill="none" stroke="#1E88E5" stroke-width="2"/><circle cx="15" cy="20" r="3" fill="none" stroke="#1E88E5" stroke-width="2"/></svg>
<svg class="r" style="left:887.00px;top:1049.00px;" width="20" height="20" viewBox="0 0 20 20"><g fill="none" stroke="#fff" stroke-width="3"><circle cx="10" cy="10" r="5.5"/><path d="M10 0V4M10 16V20M0 10H4M16 10H20M3 3L5.5 5.5M14.5 14.5L17 17M3 17L5.5 14.5M14.5 5.5L17 3"/></g></svg>
<svg class="r" style="left:937.00px;top:1054.00px;" width="17" height="13" viewBox="0 0 17 13"><path d="M6 0H17V13H6Z" fill="#76B900"/><path d="M0 6.5Q5 1 11 3V10Q5 11 0 6.5Z" fill="#76B900"/><path d="M3 6.5Q7 3 12 5Q8 9 5 6.5" stroke="#1C1C1C" stroke-width="1.2" fill="none"/></svg>
<svg class="r" style="left:986.00px;top:1047.00px;" width="19" height="25" viewBox="0 0 19 25"><defs><linearGradient id="drp" x1="0" y1="0" x2="0" y2="1"><stop offset="0" stop-color="#FFB020"/><stop offset=".4" stop-color="#E040A0"/><stop offset=".7" stop-color="#8050E0"/><stop offset="1" stop-color="#30A0F0"/></linearGradient></defs><path d="M9.5 0Q19 11 19 16A9.5 9 0 0 1 0 16Q0 11 9.5 0Z" fill="url(#drp)"/></svg>
<svg class="r" style="left:1032.00px;top:1048.00px;" width="26" height="26" viewBox="0 0 26 26"><circle cx="11" cy="11" r="11" fill="#5865F2"/><path d="M5 8Q11 4 17 8L18 15Q15 17 13 16L11 14L9 16Q7 17 4 15Z" fill="#fff"/><circle cx="8.5" cy="11" r="1.5" fill="#5865F2"/><circle cx="13.5" cy="11" r="1.5" fill="#5865F2"/><circle cx="19" cy="19" r="6.5" fill="#E84050"/><circle cx="19" cy="19" r="3" fill="#fff"/></svg>
<svg class="r" style="left:1081.00px;top:1048.00px;" width="24" height="24" viewBox="0 0 24 24"><rect width="24" height="24" rx="2" fill="#C8161D"/><text x="3" y="9" font-size="8" font-family="Liberation Sans" font-weight="700" fill="#fff">PDF</text><path d="M6 20L20 11M9 21L21 14" stroke="#fff" stroke-width="1.5"/></svg>
<svg class="r" style="left:1130.00px;top:1048.00px;" width="26" height="26" viewBox="0 0 26 26"><circle cx="11.5" cy="11.5" r="11" fill="#DB4437"/><path d="M11.5 11.5L22.5 11.5A11 11 0 0 1 6 21Z" fill="#0F9D58"/><path d="M11.5 11.5L6 21A11 11 0 0 1 1.5 6Z" fill="#0F9D58"/><path d="M11.5 11.5L22.5 11.5A11 11 0 0 1 11.5 22.5Z" fill="#F4B400"/><circle cx="11.5" cy="11.5" r="5" fill="#fff"/><circle cx="11.5" cy="11.5" r="4" fill="#4285F4"/><circle cx="18" cy="18" r="7" fill="#1030A0"/></svg>
<svg class="r" style="left:1178.00px;top:1047.00px;" width="26" height="26" viewBox="0 0 26 26"><path d="M18 1L25 4V22L18 25L6 14L2 17L0 16V10L2 9L6 12ZM18 7L11 13L18 19Z" fill="#1F9CF0"/><path d="M18 1L25 4V22L18 25Z" fill="#0A6FC0"/></svg>
<svg class="r" style="left:1229.00px;top:1048.00px;" width="22" height="24" viewBox="0 0 22 24"><path d="M11 0L22 6V18L11 24L0 18V6Z" fill="#6A6A6A"/><path d="M11 4L18 16H5Z" fill="none" stroke="#ddd" stroke-width="1.5"/></svg>
<svg class="r" style="left:1276.00px;top:1048.00px;" width="25" height="25" viewBox="0 0 25 25"><circle cx="12.5" cy="12.5" r="9" fill="none" stroke="#fff" stroke-width="3"/><path d="M12.5 12.5L17 5" stroke="#fff" stroke-width="3"/><circle cx="12.5" cy="12.5" r="12" fill="none" stroke="#fff" stroke-width="1" stroke-dasharray="1 3"/></svg>
<svg class="r" style="left:1460.00px;top:1051.00px;" width="19" height="19" viewBox="0 0 19 19"><defs><radialGradient id="sun" cx=".35" cy=".3"><stop offset="0" stop-color="#FFE680"/><stop offset="1" stop-color="#F5A000"/></radialGradient></defs><circle cx="9.5" cy="9.5" r="9.3" fill="url(#sun)"/></svg>
<div class="t" style="left:1488.50px;top:1053.72px;font-size:14.50px;color:#fff;font-family:'Liberation Sans', sans-serif;font-weight:400;transform:scaleX(0.9087);transform-origin:0 0;">63°F</div>
<div class="t" style="left:1525.00px;top:1053.72px;font-size:14.50px;color:#fff;font-family:'Liberation Sans', sans-serif;font-weight:400;transform:scaleX(0.9244);transform-origin:0 0;">Sunny</div>
<svg class="r" style="left:1580.00px;top:1054.00px;" width="13" height="8" viewBox="0 0 13 8"><path d="M1 7L6.5 1.5L12 7" fill="none" stroke="#fff" stroke-width="1.4"/></svg>
<svg class="r" style="left:1602.00px;top:1054.00px;" width="17" height="10" viewBox="0 0 17 10"><path d="M4 10A4 4 0 0 1 4 3Q6 0 9 1Q12 -1 14 3A3.5 3.5 0 0 1 14 10Z" fill="#dcdcdc"/></svg>
<svg class="r" style="left:1629.00px;top:1052.00px;" width="11" height="16" viewBox="0 0 11 16"><g fill="none" stroke="#fff" stroke-width="1.2"><rect x="1" y="4" width="6" height="8"/><path d="M7 7L10 5V11L7 9M2 2Q4 0 6 2M2 14Q4 16 6 14"/></g></svg>
<svg class="r" style="left:1650.00px;top:1052.00px;" width="17" height="16" viewBox="0 0 17 16"><g fill="none" stroke="#fff" stroke-width="1.2"><rect x="1" y="1" width="15" height="11"/><path d="M5 8Q5 4 9 4L11 3M12 5Q12 9 8 9L6 10"/></g><circle cx="13.5" cy="13" r="2.8" fill="#2080F0"/></svg>
<svg class="r" style="left:1674.00px;top:1055.00px;" width="17" height="10" viewBox="0 0 17 10"><rect x="1" y="1" width="14" height="8" fill="none" stroke="#fff" stroke-width="1.2"/><rect x="3" y="3" width="8" height="4" fill="#fff"/><rect x="15" y="3.5" width="2" height="3" fill="#fff"/></svg>
<svg class="r" style="left:1700.00px;top:1053.00px;" width="14" height="14" viewBox="0 0 14 14"><g fill="none" stroke="#fff" stroke-width="1.2"><path d="M1 13A12 12 0 0 1 13 1M4 13A9 9 0 0 1 13 4M7 13A6 6 0 0 1 13 7M10 13A3 3 0 0 1 13 10"/></g></svg>
<svg class="r" style="left:1722.00px;top:1052.00px;" width="15" height="15" viewBox="0 0 15 15"><g fill="none" stroke="#fff" stroke-width="1.2"><path d="M1 5H4L8 1V14L4 10H1Z"/><path d="M10 5L14 10M14 5L10 10"/></g></svg>
<div class="t" style="left:1753.00px;top:1042.72px;font-size:14.50px;color:#fff;font-family:'Liberation Sans', sans-serif;font-weight:400;transform:scaleX(0.7776);transform-origin:0 0;">6:06 PM</div>
<div class="t" style="left:1748.00px;top:1060.42px;font-size:14.50px;color:#fff;font-family:'Liberation Sans', sans-serif;font-weight:400;transform:scaleX(0.8059);transform-origin:0 0;">5/10/2022</div>
<svg class="r" style="left:1817.00px;top:1052.00px;" width="18" height="17" viewBox="0 0 18 17"><path d="M1 1H17V12H7L4 16V12H1Z" fill="none" stroke="#fff" stroke-width="1.3"/></svg>
<div class="r" style="left:1854.00px;top:1040.00px;width:1.00px;height:36.00px;background:#555;"></div>
<div style="position:absolute;left:253px;top:127px;width:1089px;height:606px;overflow:hidden">
<div style="position:absolute;left:68.00px;top:0.00px;width:4.00px;height:205.25px;background:#487E02;"></div>
<div style="position:absolute;left:68.00px;top:259.95px;width:4.00px;height:346.05px;background:#487E02;"></div>
<div style="position:absolute;left:98.00px;top:259.95px;width:1.00px;height:218.80px;background:#fff;"></div>
<div style="position:absolute;left:98.00px;top:506.10px;width:1.00px;height:99.90px;background:#fff;"></div>
<div style="position:absolute;left:142.00px;top:342.00px;width:1.00px;height:109.40px;background:#fff;"></div>
<div style="position:absolute;left:142.00px;top:506.10px;width:1.00px;height:27.35px;background:#fff;"></div>
<div style="position:absolute;left:99.00px;top:479.00px;width:878.00px;height:1.00px;background:#F38518;"></div>
<div style="position:absolute;left:99.00px;top:506.00px;width:878.00px;height:1.00px;background:#F38518;"></div>
<div style="position:absolute;left:980.00px;top:2.00px;width:2.00px;height:18.00px;background:#62A10A;"></div>
<div style="position:absolute;left:980.00px;top:24.00px;width:2.00px;height:76.00px;background:#62A10A;"></div>
<div style="position:absolute;left:980.00px;top:95.00px;width:2.00px;height:2.00px;background:#0A84D0;"></div>
<div style="position:absolute;left:986.00px;top:40.00px;width:82.00px;height:2.00px;background:#A0A0A0;"></div>
<div style="position:absolute;left:986.00px;top:4.50px;width:8.00px;height:1.00px;background:#C586C0;opacity:.55;"></div>
<div style="position:absolute;left:994.00px;top:4.50px;width:10.00px;height:1.00px;background:#CE9178;opacity:.55;"></div>
<div style="position:absolute;left:986.00px;top:6.50px;width:8.00px;height:1.00px;background:#C586C0;opacity:.55;"></div>
<div style="position:absolute;left:994.00px;top:6.50px;width:10.00px;height:1.00px;background:#CE9178;opacity:.55;"></div>
<div style="position:absolute;left:986.00px;top:10.50px;width:14.00px;height:1.00px;background:#7CA668;opacity:.55;"></div>
<div style="position:absolute;left:986.00px;top:12.50px;width:5.00px;height:1.00px;background:#569CD6;opacity:.55;"></div>
<div style="position:absolute;left:992.00px;top:12.50px;width:4.00px;height:1.00px;background:#569CD6;opacity:.55;"></div>
<div style="position:absolute;left:997.00px;top:12.50px;width:4.00px;height:1.00px;background:#FFFFFF;opacity:.55;"></div>
<div style="position:absolute;left:1002.00px;top:12.50px;width:1.00px;height:1.00px;background:#FFFFFF;opacity:.55;"></div>
<div style="position:absolute;left:1004.00px;top:12.50px;width:3.00px;height:1.00px;background:#CE9178;opacity:.55;"></div>
<div style="position:absolute;left:1007.00px;top:12.50px;width:1.00px;height:1.00px;background:#FFFFFF;opacity:.55;"></div>
<div style="position:absolute;left:986.00px;top:14.50px;width:5.00px;height:1.00px;background:#569CD6;opacity:.55;"></div>
<div style="position:absolute;left:992.00px;top:14.50px;width:4.00px;height:1.00px;background:#569CD6;opacity:.55;"></div>
<div style="position:absolute;left:997.00px;top:14.50px;width:5.00px;height:1.00px;background:#FFFFFF;opacity:.55;"></div>
<div style="position:absolute;left:1003.00px;top:14.50px;width:1.00px;height:1.00px;background:#FFFFFF;opacity:.55;"></div>
<div style="position:absolute;left:1005.00px;top:14.50px;width:3.00px;height:1.00px;background:#CE9178;opacity:.55;"></div>
<div style="position:absolute;left:1008.00px;top:14.50px;width:1.00px;height:1.00px;background:#FFFFFF;opacity:.55;"></div>
<div style="position:absolute;left:986.00px;top:16.50px;width:2.00px;height:1.00px;background:#7CA668;opacity:.55;"></div>
<div style="position:absolute;left:989.00px;top:16.50px;width:9.00px;height:1.00px;background:#7CA668;opacity:.55;"></div>
<div style="position:absolute;left:999.00px;top:16.50px;width:2.00px;height:1.00px;background:#7CA668;opacity:.55;"></div>
<div style="position:absolute;left:1002.00px;top:16.50px;width:4.00px;height:1.00px;background:#7CA668;opacity:.55;"></div>
<div style="position:absolute;left:1007.00px;top:16.50px;width:2.00px;height:1.00px;background:#7CA668;opacity:.55;"></div>
<div style="position:absolute;left:1010.00px;top:16.50px;width:4.00px;height:1.00px;background:#7CA668;opacity:.55;"></div>
<div style="position:absolute;left:1015.00px;top:16.50px;width:7.00px;height:1.00px;background:#7CA668;opacity:.55;"></div>
<div style="position:absolute;left:1023.00px;top:16.50px;width:6.00px;height:1.00px;background:#7CA668;opacity:.55;"></div>
<div style="position:absolute;left:1030.00px;top:16.50px;width:6.00px;height:1.00px;background:#7CA668;opacity:.55;"></div>
<div style="position:absolute;left:1037.00px;top:16.50px;width:7.00px;height:1.00px;background:#7CA668;opacity:.55;"></div>
<div style="position:absolute;left:1045.00px;top:16.50px;width:2.00px;height:1.00px;background:#7CA668;opacity:.55;"></div>
<div style="position:absolute;left:1048.00px;top:16.50px;width:3.00px;height:1.00px;background:#7CA668;opacity:.55;"></div>
<div style="position:absolute;left:1052.00px;top:16.50px;width:5.00px;height:1.00px;background:#7CA668;opacity:.55;"></div>
<div style="position:absolute;left:986.00px;top:18.50px;width:2.00px;height:1.00px;background:#7CA668;opacity:.55;"></div>
<div style="position:absolute;left:989.00px;top:18.50px;width:2.00px;height:1.00px;background:#7CA668;opacity:.55;"></div>
<div style="position:absolute;left:992.00px;top:18.50px;width:3.00px;height:1.00px;background:#7CA668;opacity:.55;"></div>
<div style="position:absolute;left:996.00px;top:18.50px;width:4.00px;height:1.00px;background:#7CA668;opacity:.55;"></div>
<div style="position:absolute;left:1001.00px;top:18.50px;width:7.00px;height:1.00px;background:#7CA668;opacity:.55;"></div>
<div style="position:absolute;left:1009.00px;top:18.50px;width:3.00px;height:1.00px;background:#7CA668;opacity:.55;"></div>
<div style="position:absolute;left:1013.00px;top:18.50px;width:4.00px;height:1.00px;background:#7CA668;opacity:.55;"></div>
<div style="position:absolute;left:1018.00px;top:18.50px;width:4.00px;height:1.00px;background:#7CA668;opacity:.55;"></div>
<div style="position:absolute;left:1023.00px;top:18.50px;width:2.00px;height:1.00px;background:#7CA668;opacity:.55;"></div>
<div style="position:absolute;left:1026.00px;top:18.50px;width:4.00px;height:1.00px;background:#7CA668;opacity:.55;"></div>
<div style="position:absolute;left:986.00px;top:22.50px;width:4.00px;height:1.00px;background:#569CD6;opacity:.55;"></div>
<div style="position:absolute;left:991.00px;top:22.50px;width:5.00px;height:1.00px;background:#DCDCAA;opacity:.55;"></div>
<div style="position:absolute;left:996.00px;top:22.50px;width:1.00px;height:1.00px;background:#FFD700;opacity:.55;"></div>
<div style="position:absolute;left:997.00px;top:22.50px;width:4.00px;height:1.00px;background:#569CD6;opacity:.55;"></div>
<div style="position:absolute;left:1002.00px;top:22.50px;width:1.00px;height:1.00px;background:#FFFFFF;opacity:.55;"></div>
<div style="position:absolute;left:1003.00px;top:22.50px;width:7.00px;height:1.00px;background:#9CDCFE;opacity:.55;"></div>
<div style="position:absolute;left:1010.00px;top:22.50px;width:1.00px;height:1.00px;background:#FFFFFF;opacity:.55;"></div>
<div style="position:absolute;left:1012.00px;top:22.50px;width:4.00px;height:1.00px;background:#569CD6;opacity:.55;"></div>
<div style="position:absolute;left:1017.00px;top:22.50px;width:1.00px;height:1.00px;background:#FFFFFF;opacity:.55;"></div>
<div style="position:absolute;left:1018.00px;top:22.50px;width:4.00px;height:1.00px;background:#9CDCFE;opacity:.55;"></div>
<div style="position:absolute;left:1022.00px;top:22.50px;width:1.00px;height:1.00px;background:#FFD700;opacity:.55;"></div>
<div style="position:absolute;left:1024.00px;top:22.50px;width:1.00px;height:1.00px;background:#FFD700;opacity:.55;"></div>
<div style="position:absolute;left:990.00px;top:24.50px;width:6.00px;height:1.00px;background:#DCDCAA;opacity:.55;"></div>
<div style="position:absolute;left:996.00px;top:24.50px;width:1.00px;height:1.00px;background:#DA70D6;opacity:.55;"></div>
<div style="position:absolute;left:997.00px;top:24.50px;width:9.00px;height:1.00px;background:#CE9178;opacity:.55;"></div>
<div style="position:absolute;left:1007.00px;top:24.50px;width:2.00px;height:1.00px;background:#CE9178;opacity:.55;"></div>
<div style="position:absolute;left:1010.00px;top:24.50px;width:2.00px;height:1.00px;background:#569CD6;opacity:.55;"></div>
<div style="position:absolute;left:1012.00px;top:24.50px;width:1.00px;height:1.00px;background:#CE9178;opacity:.55;"></div>
<div style="position:absolute;left:1013.00px;top:24.50px;width:1.00px;height:1.00px;background:#FFFFFF;opacity:.55;"></div>
<div style="position:absolute;left:1015.00px;top:24.50px;width:7.00px;height:1.00px;background:#FFFFFF;opacity:.55;"></div>
<div style="position:absolute;left:1022.00px;top:24.50px;width:1.00px;height:1.00px;background:#DA70D6;opacity:.55;"></div>
<div style="position:absolute;left:1023.00px;top:24.50px;width:1.00px;height:1.00px;background:#FFFFFF;opacity:.55;"></div>
<div style="position:absolute;left:990.00px;top:26.50px;width:6.00px;height:1.00px;background:#DCDCAA;opacity:.55;"></div>
<div style="position:absolute;left:996.00px;top:26.50px;width:1.00px;height:1.00px;background:#DA70D6;opacity:.55;"></div>
<div style="position:absolute;left:997.00px;top:26.50px;width:6.00px;height:1.00px;background:#CE9178;opacity:.55;"></div>
<div style="position:absolute;left:1004.00px;top:26.50px;width:2.00px;height:1.00px;background:#CE9178;opacity:.55;"></div>
<div style="position:absolute;left:1007.00px;top:26.50px;width:2.00px;height:1.00px;background:#569CD6;opacity:.55;"></div>
<div style="position:absolute;left:1009.00px;top:26.50px;width:1.00px;height:1.00px;background:#CE9178;opacity:.55;"></div>
<div style="position:absolute;left:1010.00px;top:26.50px;width:1.00px;height:1.00px;background:#FFFFFF;opacity:.55;"></div>
<div style="position:absolute;left:1012.00px;top:26.50px;width:4.00px;height:1.00px;background:#FFFFFF;opacity:.55;"></div>
<div style="position:absolute;left:1016.00px;top:26.50px;width:1.00px;height:1.00px;background:#DA70D6;opacity:.55;"></div>
<div style="position:absolute;left:1017.00px;top:26.50px;width:1.00px;height:1.00px;background:#FFFFFF;opacity:.55;"></div>
<div style="position:absolute;left:990.00px;top:28.50px;width:2.00px;height:1.00px;background:#7CA668;opacity:.55;"></div>
<div style="position:absolute;left:993.00px;top:28.50px;width:2.00px;height:1.00px;background:#7CA668;opacity:.55;"></div>
<div style="position:absolute;left:996.00px;top:28.50px;width:7.00px;height:1.00px;background:#7CA668;opacity:.55;"></div>
<div style="position:absolute;left:1004.00px;top:28.50px;width:1.00px;height:1.00px;background:#7CA668;opacity:.55;"></div>
<div style="position:absolute;left:1006.00px;top:28.50px;width:4.00px;height:1.00px;background:#7CA668;opacity:.55;"></div>
<div style="position:absolute;left:994.00px;top:30.50px;width:2.00px;height:1.00px;background:#7CA668;opacity:.55;"></div>
<div style="position:absolute;left:997.00px;top:30.50px;width:5.00px;height:1.00px;background:#7CA668;opacity:.55;"></div>
<div style="position:absolute;left:1003.00px;top:30.50px;width:3.00px;height:1.00px;background:#7CA668;opacity:.55;"></div>
<div style="position:absolute;left:1007.00px;top:30.50px;width:4.00px;height:1.00px;background:#7CA668;opacity:.55;"></div>
<div style="position:absolute;left:1012.00px;top:30.50px;width:6.00px;height:1.00px;background:#7CA668;opacity:.55;"></div>
<div style="position:absolute;left:1019.00px;top:30.50px;width:3.00px;height:1.00px;background:#7CA668;opacity:.55;"></div>
<div style="position:absolute;left:1023.00px;top:30.50px;width:1.00px;height:1.00px;background:#7CA668;opacity:.55;"></div>
<div style="position:absolute;left:1025.00px;top:30.50px;width:2.00px;height:1.00px;background:#7CA668;opacity:.55;"></div>
<div style="position:absolute;left:1028.00px;top:30.50px;width:7.00px;height:1.00px;background:#7CA668;opacity:.55;"></div>
<div style="position:absolute;left:994.00px;top:32.50px;width:2.00px;height:1.00px;background:#7CA668;opacity:.55;"></div>
<div style="position:absolute;left:997.00px;top:32.50px;width:4.00px;height:1.00px;background:#7CA668;opacity:.55;"></div>
<div style="position:absolute;left:1002.00px;top:32.50px;width:8.00px;height:1.00px;background:#7CA668;opacity:.55;"></div>
<div style="position:absolute;left:1011.00px;top:32.50px;width:4.00px;height:1.00px;background:#7CA668;opacity:.55;"></div>
<div style="position:absolute;left:1016.00px;top:32.50px;width:5.00px;height:1.00px;background:#7CA668;opacity:.55;"></div>
<div style="position:absolute;left:994.00px;top:34.50px;width:5.00px;height:1.00px;background:#7CA668;opacity:.55;"></div>
<div style="position:absolute;left:1000.00px;top:34.50px;width:4.00px;height:1.00px;background:#7CA668;opacity:.55;"></div>
<div style="position:absolute;left:1005.00px;top:34.50px;width:7.00px;height:1.00px;background:#7CA668;opacity:.55;"></div>
<div style="position:absolute;left:1013.00px;top:34.50px;width:9.00px;height:1.00px;background:#7CA668;opacity:.55;"></div>
<div style="position:absolute;left:991.00px;top:36.50px;width:6.00px;height:1.00px;background:#7CA668;opacity:.55;"></div>
<div style="position:absolute;left:998.00px;top:36.50px;width:4.00px;height:1.00px;background:#7CA668;opacity:.55;"></div>
<div style="position:absolute;left:990.00px;top:38.50px;width:6.00px;height:1.00px;background:#DCDCAA;opacity:.55;"></div>
<div style="position:absolute;left:997.00px;top:38.50px;width:1.00px;height:1.00px;background:#DA70D6;opacity:.55;"></div>
<div style="position:absolute;left:998.00px;top:38.50px;width:3.00px;height:1.00px;background:#CE9178;opacity:.55;"></div>
<div style="position:absolute;left:1001.00px;top:38.50px;width:2.00px;height:1.00px;background:#569CD6;opacity:.55;"></div>
<div style="position:absolute;left:1003.00px;top:38.50px;width:1.00px;height:1.00px;background:#CE9178;opacity:.55;"></div>
<div style="position:absolute;left:1004.00px;top:38.50px;width:1.00px;height:1.00px;background:#FFFFFF;opacity:.55;"></div>
<div style="position:absolute;left:1005.00px;top:38.50px;width:6.00px;height:1.00px;background:#DCDCAA;opacity:.55;"></div>
<div style="position:absolute;left:1011.00px;top:38.50px;width:1.00px;height:1.00px;background:#179FFF;opacity:.55;"></div>
<div style="position:absolute;left:1012.00px;top:38.50px;width:8.00px;height:1.00px;background:#FFFFFF;opacity:.55;"></div>
<div style="position:absolute;left:1021.00px;top:38.50px;width:4.00px;height:1.00px;background:#FFFFFF;opacity:.55;"></div>
<div style="position:absolute;left:1025.00px;top:38.50px;width:1.00px;height:1.00px;background:#179FFF;opacity:.55;"></div>
<div style="position:absolute;left:1026.00px;top:38.50px;width:1.00px;height:1.00px;background:#DA70D6;opacity:.55;"></div>
<div style="position:absolute;left:1027.00px;top:38.50px;width:1.00px;height:1.00px;background:#FFFFFF;opacity:.55;"></div>
<div style="position:absolute;left:990.00px;top:40.50px;width:2.00px;height:1.00px;background:#C586C0;opacity:.55;"></div>
<div style="position:absolute;left:992.00px;top:40.50px;width:1.00px;height:1.00px;background:#DA70D6;opacity:.55;"></div>
<div style="position:absolute;left:993.00px;top:40.50px;width:6.00px;height:1.00px;background:#DCDCAA;opacity:.55;"></div>
<div style="position:absolute;left:999.00px;top:40.50px;width:1.00px;height:1.00px;background:#179FFF;opacity:.55;"></div>
<div style="position:absolute;left:1000.00px;top:40.50px;width:8.00px;height:1.00px;background:#FFFFFF;opacity:.55;"></div>
<div style="position:absolute;left:1009.00px;top:40.50px;width:4.00px;height:1.00px;background:#FFFFFF;opacity:.55;"></div>
<div style="position:absolute;left:1013.00px;top:40.50px;width:1.00px;height:1.00px;background:#179FFF;opacity:.55;"></div>
<div style="position:absolute;left:1015.00px;top:40.50px;width:2.00px;height:1.00px;background:#FFFFFF;opacity:.55;"></div>
<div style="position:absolute;left:1018.00px;top:40.50px;width:1.00px;height:1.00px;background:#B5CEA8;opacity:.55;"></div>
<div style="position:absolute;left:1019.00px;top:40.50px;width:1.00px;height:1.00px;background:#DA70D6;opacity:.55;"></div>
<div style="position:absolute;left:1020.00px;top:40.50px;width:1.00px;height:1.00px;background:#DA70D6;opacity:.55;"></div>
<div style="position:absolute;left:994.00px;top:42.50px;width:6.00px;height:1.00px;background:#C586C0;opacity:.55;"></div>
<div style="position:absolute;left:1001.00px;top:42.50px;width:4.00px;height:1.00px;background:#569CD6;opacity:.55;"></div>
<div style="position:absolute;left:1005.00px;top:42.50px;width:1.00px;height:1.00px;background:#FFFFFF;opacity:.55;"></div>
<div style="position:absolute;left:990.00px;top:44.50px;width:1.00px;height:1.00px;background:#DA70D6;opacity:.55;"></div>
<div style="position:absolute;left:990.00px;top:48.50px;width:2.00px;height:1.00px;background:#C586C0;opacity:.55;"></div>
<div style="position:absolute;left:992.00px;top:48.50px;width:1.00px;height:1.00px;background:#DA70D6;opacity:.55;"></div>
<div style="position:absolute;left:993.00px;top:48.50px;width:6.00px;height:1.00px;background:#DCDCAA;opacity:.55;"></div>
<div style="position:absolute;left:999.00px;top:48.50px;width:1.00px;height:1.00px;background:#179FFF;opacity:.55;"></div>
<div style="position:absolute;left:1000.00px;top:48.50px;width:8.00px;height:1.00px;background:#FFFFFF;opacity:.55;"></div>
<div style="position:absolute;left:1008.00px;top:48.50px;width:1.00px;height:1.00px;background:#FFD700;opacity:.55;"></div>
<div style="position:absolute;left:1009.00px;top:48.50px;width:1.00px;height:1.00px;background:#B5CEA8;opacity:.55;"></div>
<div style="position:absolute;left:1010.00px;top:48.50px;width:1.00px;height:1.00px;background:#FFD700;opacity:.55;"></div>
<div style="position:absolute;left:1011.00px;top:48.50px;width:1.00px;height:1.00px;background:#FFFFFF;opacity:.55;"></div>
<div style="position:absolute;left:1013.00px;top:48.50px;width:4.00px;height:1.00px;background:#FFFFFF;opacity:.55;"></div>
<div style="position:absolute;left:1017.00px;top:48.50px;width:1.00px;height:1.00px;background:#179FFF;opacity:.55;"></div>
<div style="position:absolute;left:1019.00px;top:48.50px;width:2.00px;height:1.00px;background:#FFFFFF;opacity:.55;"></div>
<div style="position:absolute;left:1022.00px;top:48.50px;width:1.00px;height:1.00px;background:#B5CEA8;opacity:.55;"></div>
<div style="position:absolute;left:1023.00px;top:48.50px;width:1.00px;height:1.00px;background:#DA70D6;opacity:.55;"></div>
<div style="position:absolute;left:1024.00px;top:48.50px;width:1.00px;height:1.00px;background:#DA70D6;opacity:.55;"></div>
<div style="position:absolute;left:1026.00px;top:48.50px;width:2.00px;height:1.00px;background:#7CA668;opacity:.55;"></div>
<div style="position:absolute;left:1029.00px;top:48.50px;width:1.00px;height:1.00px;background:#7CA668;opacity:.55;"></div>
<div style="position:absolute;left:1031.00px;top:48.50px;width:9.00px;height:1.00px;background:#7CA668;opacity:.55;"></div>
<div style="position:absolute;left:986.00px;top:0.50px;width:8.00px;height:1.00px;background:#C586C0;opacity:.55;"></div>
<div style="position:absolute;left:994.00px;top:0.50px;width:10.00px;height:1.00px;background:#CE9178;opacity:.55;"></div>
<div style="position:absolute;left:986.00px;top:2.50px;width:8.00px;height:1.00px;background:#C586C0;opacity:.55;"></div>
<div style="position:absolute;left:994.00px;top:2.50px;width:9.00px;height:1.00px;background:#CE9178;opacity:.55;"></div>
<div style="position:absolute;left:990.00px;top:50.50px;width:6.00px;height:1.00px;background:#DCDCAA;opacity:.55;"></div>
<div style="position:absolute;left:996.00px;top:50.50px;width:1.00px;height:1.00px;background:#DA70D6;opacity:.55;"></div>
<div style="position:absolute;left:997.00px;top:50.50px;width:12.00px;height:1.00px;background:#CE9178;opacity:.55;"></div>
<div style="position:absolute;left:1010.00px;top:50.50px;width:3.00px;height:1.00px;background:#FFFFFF;opacity:.55;"></div>
<div style="position:absolute;left:994.00px;top:52.50px;width:3.00px;height:1.00px;background:#569CD6;opacity:.55;"></div>
<div style="position:absolute;left:998.00px;top:52.50px;width:6.00px;height:1.00px;background:#FFFFFF;opacity:.55;"></div>
<div style="position:absolute;left:994.00px;top:54.50px;width:39.00px;height:1.00px;background:#7CA668;opacity:.55;"></div>
<div style="position:absolute;left:994.00px;top:56.50px;width:35.00px;height:1.00px;background:#7CA668;opacity:.55;"></div>
<div style="position:absolute;left:994.00px;top:58.50px;width:5.00px;height:1.00px;background:#C586C0;opacity:.55;"></div>
<div style="position:absolute;left:999.00px;top:58.50px;width:1.00px;height:1.00px;background:#DA70D6;opacity:.55;"></div>
<div style="position:absolute;left:1000.00px;top:58.50px;width:6.00px;height:1.00px;background:#FFFFFF;opacity:.55;"></div>
<div style="position:absolute;left:1010.00px;top:58.50px;width:6.00px;height:1.00px;background:#DCDCAA;opacity:.55;"></div>
<div style="position:absolute;left:1016.00px;top:58.50px;width:4.00px;height:1.00px;background:#FFFFFF;opacity:.55;"></div>
<div style="position:absolute;left:998.00px;top:60.50px;width:6.00px;height:1.00px;background:#DCDCAA;opacity:.55;"></div>
<div style="position:absolute;left:1004.00px;top:60.50px;width:1.00px;height:1.00px;background:#DA70D6;opacity:.55;"></div>
<div style="position:absolute;left:1005.00px;top:60.50px;width:4.00px;height:1.00px;background:#CE9178;opacity:.55;"></div>
<div style="position:absolute;left:1009.00px;top:60.50px;width:4.00px;height:1.00px;background:#569CD6;opacity:.55;"></div>
<div style="position:absolute;left:1013.00px;top:60.50px;width:4.00px;height:1.00px;background:#FFFFFF;opacity:.55;"></div>
<div style="position:absolute;left:998.00px;top:62.50px;width:36.00px;height:1.00px;background:#7CA668;opacity:.55;"></div>
<div style="position:absolute;left:998.00px;top:64.50px;width:32.00px;height:1.00px;background:#7CA668;opacity:.55;"></div>
<div style="position:absolute;left:998.00px;top:66.50px;width:4.00px;height:1.00px;background:#FFFFFF;opacity:.55;"></div>
<div style="position:absolute;left:994.00px;top:68.50px;width:1.00px;height:1.00px;background:#DA70D6;opacity:.55;"></div>
<div style="position:absolute;left:994.00px;top:70.50px;width:6.00px;height:1.00px;background:#DCDCAA;opacity:.55;"></div>
<div style="position:absolute;left:1000.00px;top:70.50px;width:20.00px;height:1.00px;background:#FFFFFF;opacity:.55;"></div>
<div style="position:absolute;left:1020.00px;top:70.50px;width:30.00px;height:1.00px;background:#7CA668;opacity:.55;"></div>
<div style="position:absolute;left:990.00px;top:72.50px;width:1.00px;height:1.00px;background:#DA70D6;opacity:.55;"></div>
<div style="position:absolute;left:992.00px;top:72.50px;width:4.00px;height:1.00px;background:#C586C0;opacity:.55;"></div>
<div style="position:absolute;left:996.00px;top:72.50px;width:2.00px;height:1.00px;background:#C586C0;opacity:.55;"></div>
<div style="position:absolute;left:998.00px;top:72.50px;width:10.00px;height:1.00px;background:#FFFFFF;opacity:.55;"></div>
<div style="position:absolute;left:1010.00px;top:72.50px;width:24.00px;height:1.00px;background:#7CA668;opacity:.55;"></div>
<div style="position:absolute;left:992.00px;top:74.50px;width:6.00px;height:1.00px;background:#DCDCAA;opacity:.55;"></div>
<div style="position:absolute;left:998.00px;top:74.50px;width:8.00px;height:1.00px;background:#9CDCFE;opacity:.55;"></div>
<div style="position:absolute;left:1006.00px;top:74.50px;width:2.00px;height:1.00px;background:#FFFFFF;opacity:.55;"></div>
<div style="position:absolute;left:1008.00px;top:74.50px;width:6.00px;height:1.00px;background:#FFFFFF;opacity:.55;"></div>
<div style="position:absolute;left:994.00px;top:76.50px;width:6.00px;height:1.00px;background:#DCDCAA;opacity:.55;"></div>
<div style="position:absolute;left:1000.00px;top:76.50px;width:20.00px;height:1.00px;background:#FFFFFF;opacity:.55;"></div>
<div style="position:absolute;left:1020.00px;top:76.50px;width:8.00px;height:1.00px;background:#FFFFFF;opacity:.55;"></div>
<div style="position:absolute;left:994.00px;top:78.50px;width:6.00px;height:1.00px;background:#DCDCAA;opacity:.55;"></div>
<div style="position:absolute;left:1000.00px;top:78.50px;width:8.00px;height:1.00px;background:#FFFFFF;opacity:.55;"></div>
<div style="position:absolute;left:1008.00px;top:78.50px;width:10.00px;height:1.00px;background:#FFFFFF;opacity:.55;"></div>
<div style="position:absolute;left:994.00px;top:80.50px;width:6.00px;height:1.00px;background:#DCDCAA;opacity:.55;"></div>
<div style="position:absolute;left:1000.00px;top:80.50px;width:10.00px;height:1.00px;background:#FFFFFF;opacity:.55;"></div>
<div style="position:absolute;left:1010.00px;top:80.50px;width:8.00px;height:1.00px;background:#FFFFFF;opacity:.55;"></div>
<div style="position:absolute;left:990.00px;top:82.50px;width:1.00px;height:1.00px;background:#DA70D6;opacity:.55;"></div>
<div style="position:absolute;left:992.00px;top:82.50px;width:4.00px;height:1.00px;background:#C586C0;opacity:.55;"></div>
<div style="position:absolute;left:996.00px;top:82.50px;width:2.00px;height:1.00px;background:#C586C0;opacity:.55;"></div>
<div style="position:absolute;left:998.00px;top:82.50px;width:8.00px;height:1.00px;background:#FFFFFF;opacity:.55;"></div>
<div style="position:absolute;left:1006.00px;top:82.50px;width:8.00px;height:1.00px;background:#FFFFFF;opacity:.55;"></div>
<div style="position:absolute;left:994.00px;top:84.50px;width:6.00px;height:1.00px;background:#C586C0;opacity:.55;"></div>
<div style="position:absolute;left:1001.00px;top:84.50px;width:5.00px;height:1.00px;background:#569CD6;opacity:.55;"></div>
<div style="position:absolute;left:1006.00px;top:84.50px;width:1.00px;height:1.00px;background:#FFFFFF;opacity:.55;"></div>
<div style="position:absolute;left:990.00px;top:86.50px;width:1.00px;height:1.00px;background:#DA70D6;opacity:.55;"></div>
<div style="position:absolute;left:990.00px;top:90.50px;width:40.00px;height:1.00px;background:#7CA668;opacity:.55;"></div>
<div style="position:absolute;left:990.00px;top:92.50px;width:2.00px;height:1.00px;background:#C586C0;opacity:.55;"></div>
<div style="position:absolute;left:992.00px;top:92.50px;width:1.00px;height:1.00px;background:#DA70D6;opacity:.55;"></div>
<div style="position:absolute;left:993.00px;top:92.50px;width:6.00px;height:1.00px;background:#DCDCAA;opacity:.55;"></div>
<div style="position:absolute;left:999.00px;top:92.50px;width:10.00px;height:1.00px;background:#FFFFFF;opacity:.55;"></div>
<div style="position:absolute;left:1009.00px;top:92.50px;width:8.00px;height:1.00px;background:#DCDCAA;opacity:.55;"></div>
<div style="position:absolute;left:1017.00px;top:92.50px;width:8.00px;height:1.00px;background:#FFFFFF;opacity:.55;"></div>
<div style="position:absolute;left:994.00px;top:94.50px;width:6.00px;height:1.00px;background:#C586C0;opacity:.55;"></div>
<div style="position:absolute;left:1001.00px;top:94.50px;width:5.00px;height:1.00px;background:#569CD6;opacity:.55;"></div>
<div style="position:absolute;left:1006.00px;top:94.50px;width:1.00px;height:1.00px;background:#FFFFFF;opacity:.55;"></div>
<div style="position:absolute;left:990.00px;top:96.50px;width:1.00px;height:1.00px;background:#DA70D6;opacity:.55;"></div>
<div style="position:absolute;left:990.00px;top:98.50px;width:6.00px;height:1.00px;background:#C586C0;opacity:.55;"></div>
<div style="position:absolute;left:997.00px;top:98.50px;width:4.00px;height:1.00px;background:#569CD6;opacity:.55;"></div>
<div style="position:absolute;left:1001.00px;top:98.50px;width:1.00px;height:1.00px;background:#FFFFFF;opacity:.55;"></div>
<div style="position:absolute;left:986.00px;top:100.50px;width:1.00px;height:1.00px;background:#FFD700;opacity:.55;"></div>
<div style="position:absolute;left:1068.00px;top:0.00px;width:1.00px;height:606.00px;background:#333;"></div>
<div style="position:absolute;left:1069.00px;top:8.00px;width:6.00px;height:74.00px;background:#2F5300;"></div>
<div style="position:absolute;left:1069.00px;top:99.00px;width:6.00px;height:315.00px;background:#2F5300;"></div>
<div style="position:absolute;left:1069.00px;top:390.00px;width:6.00px;height:8.00px;background:#1E5A7A;"></div>
<div style="position:absolute;left:1069.00px;top:164.00px;width:19.00px;height:2.00px;background:#D0D0D0;"></div>
<div class="m" style="left:49.42px;top:-7.49px;font-size:18.46px;color:#FFFFFF">3</div>
<div class="m" style="left:98.50px;top:-7.49px;font-size:18.46px"><span style="color:#C586C0">#include</span><span style="color:#CE9178">&lt;stdlib.h&gt;</span></div>
<div class="m" style="left:49.42px;top:19.86px;font-size:18.46px;color:#FFFFFF">4</div>
<div class="m" style="left:98.50px;top:19.86px;font-size:18.46px"><span style="color:#C586C0">#include</span><span style="color:#CE9178">&lt;string.h&gt;</span></div>
<div class="m" style="left:49.42px;top:47.21px;font-size:18.46px;color:#FFFFFF">5</div>
<div class="m" style="left:49.42px;top:74.56px;font-size:18.46px;color:#FFFFFF">6</div>
<div class="m" style="left:98.50px;top:74.56px;font-size:18.46px"><span style="color:#7CA668">//printf(&quot;&quot;,);</span></div>
<div class="m" style="left:49.42px;top:101.91px;font-size:18.46px;color:#FFFFFF">7</div>
<div class="m" style="left:98.50px;top:101.91px;font-size:18.46px"><span style="color:#569CD6">const</span><span style="color:#FFFFFF"> </span><span style="color:#569CD6">char</span><span style="color:#FFFFFF"> *dot = </span><span style="color:#CE9178">&quot;.&quot;</span><span style="color:#FFFFFF">;</span></div>
<div class="m" style="left:49.42px;top:129.26px;font-size:18.46px;color:#FFFFFF">8</div>
<div class="m" style="left:98.50px;top:129.26px;font-size:18.46px"><span style="color:#569CD6">const</span><span style="color:#FFFFFF"> </span><span style="color:#569CD6">char</span><span style="color:#FFFFFF"> *star = </span><span style="color:#CE9178">&quot;*&quot;</span><span style="color:#FFFFFF">;</span></div>
<div class="m" style="left:49.42px;top:156.61px;font-size:18.46px;color:#FFFFFF">9</div>
<div class="m" style="left:98.50px;top:156.61px;font-size:18.46px"><span style="color:#7CA668">// remember, no need to free because theyre beeing written to the stack</span></div>
<div class="m" style="left:38.34px;top:183.96px;font-size:18.46px;color:#FFFFFF">10</div>
<div class="m" style="left:98.50px;top:183.96px;font-size:18.46px"><span style="color:#7CA668">// if you dont malloc, you dont need to free</span></div>
<div class="m" style="left:38.34px;top:211.31px;font-size:18.46px;color:#FFFFFF">11</div>
<div class="m" style="left:38.34px;top:238.66px;font-size:18.46px;color:#FFFFFF">12</div>
<div class="m" style="left:98.50px;top:238.66px;font-size:18.46px"><span style="color:#569CD6">bool</span><span style="color:#FFFFFF"> </span><span style="color:#DCDCAA">match</span><span style="color:#FFD700">(</span><span style="color:#569CD6">char</span><span style="color:#FFFFFF"> *</span><span style="color:#9CDCFE">pattern</span><span style="color:#FFFFFF">, </span><span style="color:#569CD6">char</span><span style="color:#FFFFFF"> *</span><span style="color:#9CDCFE">text</span><span style="color:#FFD700">)</span><span style="color:#FFFFFF"> </span><span style="color:#FFD700">{</span></div>
<div class="m" style="left:38.34px;top:266.01px;font-size:18.46px;color:#FFFFFF">13</div>
<div class="m" style="left:98.50px;top:266.01px;font-size:18.46px"><span style="color:#FFFFFF">    </span><span style="color:#DCDCAA">printf</span><span style="color:#DA70D6">(</span><span style="color:#CE9178">&quot;pattern: %s </span><span style="color:#569CD6">\n</span><span style="color:#CE9178">&quot;</span><span style="color:#FFFFFF">, pattern</span><span style="color:#DA70D6">)</span><span style="color:#FFFFFF">;</span></div>
<div class="m" style="left:38.34px;top:293.36px;font-size:18.46px;color:#FFFFFF">14</div>
<div class="m" style="left:98.50px;top:293.36px;font-size:18.46px"><span style="color:#FFFFFF">    </span><span style="color:#DCDCAA">printf</span><span style="color:#DA70D6">(</span><span style="color:#CE9178">&quot;text: %s </span><span style="color:#569CD6">\n</span><span style="color:#CE9178">&quot;</span><span style="color:#FFFFFF">, text</span><span style="color:#DA70D6">)</span><span style="color:#FFFFFF">;</span></div>
<div class="m" style="left:38.34px;top:320.71px;font-size:18.46px;color:#FFFFFF">15</div>
<div class="m" style="left:98.50px;top:320.71px;font-size:18.46px"><span style="color:#7CA668">    // if pattern = star</span></div>
<div class="m" style="left:38.34px;top:348.06px;font-size:18.46px;color:#FFFFFF">16</div>
<div class="m" style="left:98.50px;top:348.06px;font-size:18.46px"><span style="color:#7CA668">        // store the char before the * in pattern</span></div>
<div class="m" style="left:38.34px;top:375.41px;font-size:18.46px;color:#FFFFFF">17</div>
<div class="m" style="left:98.50px;top:375.41px;font-size:18.46px"><span style="color:#7CA668">        // keep deleting text until</span></div>
<div class="m" style="left:38.34px;top:402.76px;font-size:18.46px;color:#FFFFFF">18</div>
<div class="m" style="left:98.50px;top:402.76px;font-size:18.46px"><span style="color:#7CA668">        //end with another recursion</span></div>
<div class="m" style="left:38.34px;top:430.11px;font-size:18.46px;color:#FFFFFF">19</div>
<div class="m" style="left:98.50px;top:430.11px;font-size:18.46px"><span style="color:#7CA668">     //NULL &#x27;\0&#x27;</span></div>
<div class="m" style="left:38.34px;top:457.46px;font-size:18.46px;color:#FFFFFF">20</div>
<div class="m" style="left:98.50px;top:457.46px;font-size:18.46px"><span style="color:#FFFFFF">    </span><span style="color:#DCDCAA">printf</span><span style="color:#FFFFFF"> </span><span style="color:#DA70D6">(</span><span style="color:#CE9178">&quot;%d</span><span style="color:#569CD6">\n</span><span style="color:#CE9178">&quot;</span><span style="color:#FFFFFF">,</span><span style="color:#DCDCAA">strcmp</span><span style="color:#179FFF">(</span><span style="color:#FFFFFF">pattern, text</span><span style="color:#179FFF">)</span><span style="color:#DA70D6">)</span><span style="color:#FFFFFF">;</span></div>
<div class="m" style="left:38.34px;top:484.81px;font-size:18.46px;color:#F38518">21</div>
<div class="m" style="left:98.50px;top:484.81px;font-size:18.46px"><span style="color:#FFFFFF">    </span><span style="color:#C586C0">if</span><span style="color:#DA70D6">(</span><span style="color:#DCDCAA">strcmp</span><span style="color:#179FFF">(</span><span style="color:#FFFFFF">pattern, text</span><span style="color:#179FFF">)</span><span style="color:#FFFFFF"> == </span><span style="color:#B5CEA8">0</span><span style="color:#DA70D6">)</span><span style="color:#DA70D6">{</span></div>
<div class="m" style="left:38.34px;top:512.16px;font-size:18.46px;color:#FFFFFF">22</div>
<div class="m" style="left:98.50px;top:512.16px;font-size:18.46px"><span style="color:#FFFFFF">        </span><span style="color:#C586C0">return</span><span style="color:#FFFFFF"> </span><span style="color:#569CD6">true</span><span style="color:#FFFFFF">;</span></div>
<div class="m" style="left:38.34px;top:539.51px;font-size:18.46px;color:#FFFFFF">23</div>
<div class="m" style="left:98.50px;top:539.51px;font-size:18.46px"><span style="color:#FFFFFF">    </span><span style="color:#DA70D6">}</span></div>
<div class="m" style="left:38.34px;top:566.86px;font-size:18.46px;color:#FFFFFF">24</div>
<div class="m" style="left:38.34px;top:594.21px;font-size:18.46px;color:#FFFFFF">25</div>
<div class="m" style="left:98.50px;top:594.21px;font-size:18.46px"><span style="color:#FFFFFF">    </span><span style="color:#C586C0">if</span><span style="color:#DA70D6">(</span><span style="color:#DCDCAA">strcmp</span><span style="color:#179FFF">(</span><span style="color:#FFFFFF">&amp;pattern</span><span style="color:#FFD700">[</span><span style="color:#B5CEA8">1</span><span style="color:#FFD700">]</span><span style="color:#FFFFFF">, star</span><span style="color:#179FFF">)</span><span style="color:#FFFFFF"> == </span><span style="color:#B5CEA8">0</span><span style="color:#DA70D6">)</span><span style="color:#DA70D6">{</span><span style="color:#FFFFFF"> </span><span style="color:#7CA668">// * operation</span></div>
</div>
<div style="position:absolute;left:1343px;top:127px;width:516px;height:606px;overflow:hidden">
<div style="position:absolute;left:67.00px;top:0.00px;width:4.00px;height:473.45px;background:repeating-linear-gradient(135deg,#1B9AD0 0 1.3px,transparent 1.3px 3.05px);"></div>
<div style="position:absolute;left:118.66px;top:282.00px;width:299.16px;height:27.35px;background:#B4B4B4;"></div>
<div style="position:absolute;left:96.50px;top:309.35px;width:254.84px;height:27.35px;background:#B4B4B4;"></div>
<div style="position:absolute;left:96.50px;top:336.70px;width:277.00px;height:27.35px;background:#B4B4B4;"></div>
<div style="position:absolute;left:96.50px;top:364.05px;width:210.52px;height:27.35px;background:#B4B4B4;"></div>
<div style="position:absolute;left:96.50px;top:391.40px;width:188.36px;height:27.35px;background:#B4B4B4;"></div>
<div style="position:absolute;left:454.00px;top:32.00px;width:2.00px;height:50.00px;background:#1B81A8;"></div>
<div style="position:absolute;left:460.00px;top:68.00px;width:35.00px;height:10.00px;background:#8A8A8A;"></div>
<div style="position:absolute;left:460.00px;top:46.50px;width:7.00px;height:1.00px;background:#FFFFFF;opacity:.55;"></div>
<div style="position:absolute;left:468.00px;top:46.50px;width:5.00px;height:1.00px;background:#CE9178;opacity:.55;"></div>
<div style="position:absolute;left:474.00px;top:46.50px;width:6.00px;height:1.00px;background:#CE9178;opacity:.55;"></div>
<div style="position:absolute;left:481.00px;top:46.50px;width:1.00px;height:1.00px;background:#7CA668;opacity:.55;"></div>
<div style="position:absolute;left:460.00px;top:50.50px;width:1.00px;height:1.00px;background:#7CA668;opacity:.55;"></div>
<div style="position:absolute;left:462.00px;top:50.50px;width:3.00px;height:1.00px;background:#7CA668;opacity:.55;"></div>
<div style="position:absolute;left:466.00px;top:50.50px;width:3.00px;height:1.00px;background:#7CA668;opacity:.55;"></div>
<div style="position:absolute;left:470.00px;top:50.50px;width:8.00px;height:1.00px;background:#7CA668;opacity:.55;"></div>
<div style="position:absolute;left:460.00px;top:52.50px;width:7.00px;height:1.00px;background:#FFFFFF;opacity:.55;"></div>
<div style="position:absolute;left:468.00px;top:52.50px;width:5.00px;height:1.00px;background:#CE9178;opacity:.55;"></div>
<div style="position:absolute;left:474.00px;top:52.50px;width:5.00px;height:1.00px;background:#CE9178;opacity:.55;"></div>
<div style="position:absolute;left:460.00px;top:54.50px;width:7.00px;height:1.00px;background:#FFFFFF;opacity:.55;"></div>
<div style="position:absolute;left:468.00px;top:54.50px;width:3.00px;height:1.00px;background:#CE9178;opacity:.55;"></div>
<div style="position:absolute;left:472.00px;top:54.50px;width:2.00px;height:1.00px;background:#CE9178;opacity:.55;"></div>
<div style="position:absolute;left:460.00px;top:56.50px;width:7.00px;height:1.00px;background:#FFFFFF;opacity:.55;"></div>
<div style="position:absolute;left:468.00px;top:56.50px;width:3.00px;height:1.00px;background:#CE9178;opacity:.55;"></div>
<div style="position:absolute;left:472.00px;top:56.50px;width:4.00px;height:1.00px;background:#CE9178;opacity:.55;"></div>
<div style="position:absolute;left:460.00px;top:58.50px;width:7.00px;height:1.00px;background:#FFFFFF;opacity:.55;"></div>
<div style="position:absolute;left:468.00px;top:58.50px;width:5.00px;height:1.00px;background:#CE9178;opacity:.55;"></div>
<div style="position:absolute;left:474.00px;top:58.50px;width:4.00px;height:1.00px;background:#CE9178;opacity:.55;"></div>
<div style="position:absolute;left:460.00px;top:60.50px;width:7.00px;height:1.00px;background:#FFFFFF;opacity:.55;"></div>
<div style="position:absolute;left:468.00px;top:60.50px;width:4.00px;height:1.00px;background:#CE9178;opacity:.55;"></div>
<div style="position:absolute;left:473.00px;top:60.50px;width:5.00px;height:1.00px;background:#CE9178;opacity:.55;"></div>
<div style="position:absolute;left:460.00px;top:64.50px;width:1.00px;height:1.00px;background:#7CA668;opacity:.55;"></div>
<div style="position:absolute;left:462.00px;top:64.50px;width:3.00px;height:1.00px;background:#7CA668;opacity:.55;"></div>
<div style="position:absolute;left:466.00px;top:64.50px;width:4.00px;height:1.00px;background:#7CA668;opacity:.55;"></div>
<div style="position:absolute;left:460.00px;top:66.50px;width:7.00px;height:1.00px;background:#FFFFFF;opacity:.55;"></div>
<div style="position:absolute;left:468.00px;top:66.50px;width:4.00px;height:1.00px;background:#CE9178;opacity:.55;"></div>
<div style="position:absolute;left:473.00px;top:66.50px;width:7.00px;height:1.00px;background:#CE9178;opacity:.55;"></div>
<div style="position:absolute;left:460.00px;top:68.50px;width:1.00px;height:1.00px;background:#FFFFFF;"></div>
<div style="position:absolute;left:462.00px;top:68.50px;width:7.00px;height:1.00px;background:#FFFFFF;"></div>
<div style="position:absolute;left:470.00px;top:68.50px;width:6.00px;height:1.00px;background:#FFFFFF;"></div>
<div style="position:absolute;left:477.00px;top:68.50px;width:11.00px;height:1.00px;background:#FFFFFF;"></div>
<div style="position:absolute;left:460.00px;top:70.50px;width:1.00px;height:1.00px;background:#FFFFFF;"></div>
<div style="position:absolute;left:462.00px;top:70.50px;width:7.00px;height:1.00px;background:#FFFFFF;"></div>
<div style="position:absolute;left:470.00px;top:70.50px;width:5.00px;height:1.00px;background:#FFFFFF;"></div>
<div style="position:absolute;left:476.00px;top:70.50px;width:6.00px;height:1.00px;background:#FFFFFF;"></div>
<div style="position:absolute;left:460.00px;top:72.50px;width:1.00px;height:1.00px;background:#FFFFFF;"></div>
<div style="position:absolute;left:462.00px;top:72.50px;width:7.00px;height:1.00px;background:#FFFFFF;"></div>
<div style="position:absolute;left:470.00px;top:72.50px;width:5.00px;height:1.00px;background:#FFFFFF;"></div>
<div style="position:absolute;left:476.00px;top:72.50px;width:8.00px;height:1.00px;background:#FFFFFF;"></div>
<div style="position:absolute;left:460.00px;top:74.50px;width:1.00px;height:1.00px;background:#FFFFFF;"></div>
<div style="position:absolute;left:462.00px;top:74.50px;width:7.00px;height:1.00px;background:#FFFFFF;"></div>
<div style="position:absolute;left:470.00px;top:74.50px;width:4.00px;height:1.00px;background:#FFFFFF;"></div>
<div style="position:absolute;left:475.00px;top:74.50px;width:3.00px;height:1.00px;background:#FFFFFF;"></div>
<div style="position:absolute;left:460.00px;top:76.50px;width:1.00px;height:1.00px;background:#FFFFFF;"></div>
<div style="position:absolute;left:462.00px;top:76.50px;width:7.00px;height:1.00px;background:#FFFFFF;"></div>
<div style="position:absolute;left:470.00px;top:76.50px;width:4.00px;height:1.00px;background:#FFFFFF;"></div>
<div style="position:absolute;left:475.00px;top:76.50px;width:2.00px;height:1.00px;background:#FFFFFF;"></div>
<div style="position:absolute;left:460.00px;top:84.50px;width:4.00px;height:1.00px;background:#DCDCAA;opacity:.55;"></div>
<div style="position:absolute;left:465.00px;top:84.50px;width:19.00px;height:1.00px;background:#CE9178;opacity:.55;"></div>
<div style="position:absolute;left:484.00px;top:84.50px;width:1.00px;height:1.00px;background:#FFFFFF;opacity:.55;"></div>
<div style="position:absolute;left:460.00px;top:86.50px;width:4.00px;height:1.00px;background:#DCDCAA;opacity:.55;"></div>
<div style="position:absolute;left:465.00px;top:86.50px;width:4.00px;height:1.00px;background:#CE9178;opacity:.55;"></div>
<div style="position:absolute;left:470.00px;top:86.50px;width:5.00px;height:1.00px;background:#CE9178;opacity:.55;"></div>
<div style="position:absolute;left:476.00px;top:86.50px;width:8.00px;height:1.00px;background:#CE9178;opacity:.55;"></div>
<div style="position:absolute;left:484.00px;top:86.50px;width:1.00px;height:1.00px;background:#FFFFFF;opacity:.55;"></div>
<div style="position:absolute;left:460.00px;top:0.50px;width:11.00px;height:1.00px;background:#7CA668;opacity:.55;"></div>
<div style="position:absolute;left:460.00px;top:2.50px;width:8.00px;height:1.00px;background:#569CD6;opacity:.55;"></div>
<div style="position:absolute;left:469.00px;top:2.50px;width:7.00px;height:1.00px;background:#DCDCAA;opacity:.55;"></div>
<div style="position:absolute;left:476.00px;top:2.50px;width:2.00px;height:1.00px;background:#FFFFFF;opacity:.55;"></div>
<div style="position:absolute;left:464.00px;top:4.50px;width:5.00px;height:1.00px;background:#FFFFFF;opacity:.55;"></div>
<div style="position:absolute;left:469.00px;top:4.50px;width:6.00px;height:1.00px;background:#9CDCFE;opacity:.55;"></div>
<div style="position:absolute;left:464.00px;top:6.50px;width:5.00px;height:1.00px;background:#FFFFFF;opacity:.55;"></div>
<div style="position:absolute;left:469.00px;top:6.50px;width:5.00px;height:1.00px;background:#9CDCFE;opacity:.55;"></div>
<div style="position:absolute;left:464.00px;top:8.50px;width:7.00px;height:1.00px;background:#FFFFFF;opacity:.55;"></div>
<div style="position:absolute;left:471.00px;top:8.50px;width:5.00px;height:1.00px;background:#CE9178;opacity:.55;"></div>
<div style="position:absolute;left:476.00px;top:8.50px;width:8.00px;height:1.00px;background:#FFFFFF;opacity:.55;"></div>
<div style="position:absolute;left:484.00px;top:8.50px;width:11.00px;height:1.00px;background:#CE9178;opacity:.55;"></div>
<div style="position:absolute;left:464.00px;top:10.50px;width:3.00px;height:1.00px;background:#FFFFFF;opacity:.55;"></div>
<div style="position:absolute;left:467.00px;top:10.50px;width:6.00px;height:1.00px;background:#9CDCFE;opacity:.55;"></div>
<div style="position:absolute;left:464.00px;top:12.50px;width:2.00px;height:1.00px;background:#C586C0;opacity:.55;"></div>
<div style="position:absolute;left:467.00px;top:12.50px;width:4.00px;height:1.00px;background:#569CD6;opacity:.55;"></div>
<div style="position:absolute;left:471.00px;top:12.50px;width:6.00px;height:1.00px;background:#FFFFFF;opacity:.55;"></div>
<div style="position:absolute;left:477.00px;top:12.50px;width:3.00px;height:1.00px;background:#FFFFFF;opacity:.55;"></div>
<div style="position:absolute;left:480.00px;top:12.50px;width:5.00px;height:1.00px;background:#CE9178;opacity:.55;"></div>
<div style="position:absolute;left:486.00px;top:12.50px;width:9.00px;height:1.00px;background:#CE9178;opacity:.55;"></div>
<div style="position:absolute;left:468.00px;top:14.50px;width:4.00px;height:1.00px;background:#DCDCAA;opacity:.55;"></div>
<div style="position:absolute;left:473.00px;top:14.50px;width:7.00px;height:1.00px;background:#CE9178;opacity:.55;"></div>
<div style="position:absolute;left:480.00px;top:14.50px;width:9.00px;height:1.00px;background:#CE9178;opacity:.55;"></div>
<div style="position:absolute;left:489.00px;top:14.50px;width:6.00px;height:1.00px;background:#CE9178;opacity:.55;"></div>
<div style="position:absolute;left:468.00px;top:16.50px;width:4.00px;height:1.00px;background:#DCDCAA;opacity:.55;"></div>
<div style="position:absolute;left:473.00px;top:16.50px;width:3.00px;height:1.00px;background:#FFFFFF;opacity:.55;"></div>
<div style="position:absolute;left:464.00px;top:18.50px;width:2.00px;height:1.00px;background:#C586C0;opacity:.55;"></div>
<div style="position:absolute;left:460.00px;top:20.50px;width:1.00px;height:1.00px;background:#FFFFFF;opacity:.55;"></div>
<div style="position:absolute;left:460.00px;top:24.50px;width:35.00px;height:1.00px;background:#7CA668;opacity:.55;"></div>
<div style="position:absolute;left:460.00px;top:26.50px;width:35.00px;height:1.00px;background:#7CA668;opacity:.55;"></div>
<div style="position:absolute;left:460.00px;top:28.50px;width:35.00px;height:1.00px;background:#7CA668;opacity:.55;"></div>
<div style="position:absolute;left:460.00px;top:30.50px;width:20.00px;height:1.00px;background:#7CA668;opacity:.55;"></div>
<div style="position:absolute;left:460.00px;top:32.50px;width:7.00px;height:1.00px;background:#FFFFFF;opacity:.55;"></div>
<div style="position:absolute;left:468.00px;top:32.50px;width:5.00px;height:1.00px;background:#CE9178;opacity:.55;"></div>
<div style="position:absolute;left:474.00px;top:32.50px;width:7.00px;height:1.00px;background:#CE9178;opacity:.55;"></div>
<div style="position:absolute;left:482.00px;top:32.50px;width:1.00px;height:1.00px;background:#FFFFFF;opacity:.55;"></div>
<div style="position:absolute;left:460.00px;top:36.50px;width:22.00px;height:1.00px;background:#7CA668;opacity:.55;"></div>
<div style="position:absolute;left:460.00px;top:38.50px;width:7.00px;height:1.00px;background:#FFFFFF;opacity:.55;"></div>
<div style="position:absolute;left:468.00px;top:38.50px;width:5.00px;height:1.00px;background:#CE9178;opacity:.55;"></div>
<div style="position:absolute;left:474.00px;top:38.50px;width:5.00px;height:1.00px;background:#CE9178;opacity:.55;"></div>
<div style="position:absolute;left:480.00px;top:38.50px;width:1.00px;height:1.00px;background:#FFFFFF;opacity:.55;"></div>
<div style="position:absolute;left:460.00px;top:40.50px;width:7.00px;height:1.00px;background:#FFFFFF;opacity:.55;"></div>
<div style="position:absolute;left:468.00px;top:40.50px;width:5.00px;height:1.00px;background:#CE9178;opacity:.55;"></div>
<div style="position:absolute;left:474.00px;top:40.50px;width:5.00px;height:1.00px;background:#CE9178;opacity:.55;"></div>
<div style="position:absolute;left:460.00px;top:42.50px;width:7.00px;height:1.00px;background:#FFFFFF;opacity:.55;"></div>
<div style="position:absolute;left:468.00px;top:42.50px;width:6.00px;height:1.00px;background:#CE9178;opacity:.55;"></div>
<div style="position:absolute;left:475.00px;top:42.50px;width:5.00px;height:1.00px;background:#CE9178;opacity:.55;"></div>
<div style="position:absolute;left:481.00px;top:42.50px;width:1.00px;height:1.00px;background:#FFFFFF;opacity:.55;"></div>
<div style="position:absolute;left:460.00px;top:44.50px;width:7.00px;height:1.00px;background:#FFFFFF;opacity:.55;"></div>
<div style="position:absolute;left:468.00px;top:44.50px;width:5.00px;height:1.00px;background:#CE9178;opacity:.55;"></div>
<div style="position:absolute;left:474.00px;top:44.50px;width:6.00px;height:1.00px;background:#CE9178;opacity:.55;"></div>
<div style="position:absolute;left:481.00px;top:44.50px;width:1.00px;height:1.00px;background:#FFFFFF;opacity:.55;"></div>
<div style="position:absolute;left:495.00px;top:0.00px;width:1.00px;height:606.00px;background:#333;"></div>
<div style="position:absolute;left:496.00px;top:146.00px;width:6.00px;height:229.00px;background:#1B5A7A;"></div>
<div style="position:absolute;left:496.00px;top:311.00px;width:20.00px;height:2.00px;background:#D0D0D0;"></div>
<div class="m" style="left:36.54px;top:-12.79px;font-size:18.46px;color:#FFFFFF">24</div>
<div class="m" style="left:96.50px;top:-12.79px;font-size:18.46px"><span style="color:#FFFFFF">do_test </span><span style="color:#CE9178">&#x27;aaa&#x27;</span><span style="color:#FFFFFF"> </span><span style="color:#CE9178">&#x27;aaaa&#x27;</span><span style="color:#FFFFFF"> </span><span style="color:#7CA668">#</span></div>
<div class="m" style="left:36.54px;top:14.56px;font-size:18.46px;color:#FFFFFF">25</div>
<div class="m" style="left:36.54px;top:41.91px;font-size:18.46px;color:#FFFFFF">26</div>
<div class="m" style="left:96.50px;top:41.91px;font-size:18.46px"><span style="color:#7CA668"># &quot;.&quot; dot matching</span></div>
<div class="m" style="left:36.54px;top:69.26px;font-size:18.46px;color:#FFFFFF">27</div>
<div class="m" style="left:96.50px;top:69.26px;font-size:18.46px"><span style="color:#FFFFFF">do_test </span><span style="color:#CE9178">&#x27;a.c&#x27;</span><span style="color:#FFFFFF"> </span><span style="color:#CE9178">&#x27;abc&#x27;</span></div>
<div class="m" style="left:36.54px;top:96.61px;font-size:18.46px;color:#FFFFFF">28</div>
<div class="m" style="left:96.50px;top:96.61px;font-size:18.46px"><span style="color:#FFFFFF">do_test </span><span style="color:#CE9178">&#x27;.&#x27;</span><span style="color:#FFFFFF"> </span><span style="color:#CE9178">&#x27;&#x27;</span></div>
<div class="m" style="left:36.54px;top:123.96px;font-size:18.46px;color:#FFFFFF">29</div>
<div class="m" style="left:96.50px;top:123.96px;font-size:18.46px"><span style="color:#FFFFFF">do_test </span><span style="color:#CE9178">&#x27;.&#x27;</span><span style="color:#FFFFFF"> </span><span style="color:#CE9178">&#x27;ab&#x27;</span></div>
<div class="m" style="left:36.54px;top:151.31px;font-size:18.46px;color:#FFFFFF">30</div>
<div class="m" style="left:96.50px;top:151.31px;font-size:18.46px"><span style="color:#FFFFFF">do_test </span><span style="color:#CE9178">&#x27;ab.&#x27;</span><span style="color:#FFFFFF"> </span><span style="color:#CE9178">&#x27;ab&#x27;</span></div>
<div class="m" style="left:36.54px;top:178.66px;font-size:18.46px;color:#FFFFFF">31</div>
<div class="m" style="left:96.50px;top:178.66px;font-size:18.46px"><span style="color:#FFFFFF">do_test </span><span style="color:#CE9178">&#x27;..&#x27;</span><span style="color:#FFFFFF"> </span><span style="color:#CE9178">&#x27;aaa&#x27;</span></div>
<div class="m" style="left:36.54px;top:206.01px;font-size:18.46px;color:#FFFFFF">32</div>
<div class="m" style="left:36.54px;top:233.36px;font-size:18.46px;color:#FFFFFF">33</div>
<div class="m" style="left:96.50px;top:233.36px;font-size:18.46px"><span style="color:#7CA668"># &quot;*&quot; star</span></div>
<div class="m" style="left:36.54px;top:260.71px;font-size:18.46px;color:#FFFFFF">34</div>
<div class="m" style="left:96.50px;top:260.71px;font-size:18.46px"><span style="color:#FFFFFF">do_test </span><span style="color:#CE9178">&#x27;a*&#x27;</span><span style="color:#FFFFFF"> </span><span style="color:#CE9178">&#x27;aaaaa&#x27;</span></div>
<div class="m" style="left:36.54px;top:288.06px;font-size:18.46px;color:#F38518">35</div>
<div class="m" style="left:96.50px;top:288.06px;font-size:18.46px"><span style="color:#7CA668"># </span><span style="color:#000">do_test &#x27;a*b*&#x27; &#x27;aaaabbbbb&#x27;</span></div>
<div class="m" style="left:36.54px;top:315.41px;font-size:18.46px;color:#FFFFFF">36</div>
<div class="m" style="left:96.50px;top:315.41px;font-size:18.46px"><span style="color:#000"># do_test &#x27;ab*&#x27; &#x27;abbb&#x27;</span></div>
<div class="m" style="left:36.54px;top:342.76px;font-size:18.46px;color:#FFFFFF">37</div>
<div class="m" style="left:96.50px;top:342.76px;font-size:18.46px"><span style="color:#000"># do_test &#x27;a*b&#x27; &#x27;aaaaab&#x27;</span></div>
<div class="m" style="left:36.54px;top:370.11px;font-size:18.46px;color:#FFFFFF">38</div>
<div class="m" style="left:96.50px;top:370.11px;font-size:18.46px"><span style="color:#000"># do_test &#x27;a*&#x27; &#x27;a&#x27;</span></div>
<div class="m" style="left:36.54px;top:397.46px;font-size:18.46px;color:#FFFFFF">39</div>
<div class="m" style="left:96.50px;top:397.46px;font-size:18.46px"><span style="color:#000"># do_test &#x27;a*&#x27; &#x27;&#x27;</span></div>
<div class="m" style="left:36.54px;top:424.81px;font-size:18.46px;color:#FFFFFF">40</div>
<div class="m" style="left:36.54px;top:452.16px;font-size:18.46px;color:#FFFFFF">41</div>
<div class="m" style="left:36.54px;top:479.51px;font-size:18.46px;color:#FFFFFF">42</div>
<div class="m" style="left:36.54px;top:506.86px;font-size:18.46px;color:#FFFFFF">43</div>
<div class="m" style="left:96.50px;top:506.86px;font-size:18.46px"><span style="color:#DCDCAA">echo</span><span style="color:#FFFFFF"> </span><span style="color:#CE9178">&#x27;-----------------&#x27;</span><span style="color:#FFFFFF">;</span></div>
<div class="m" style="left:36.54px;top:534.21px;font-size:18.46px;color:#FFFFFF">44</div>
<div class="m" style="left:96.50px;top:534.21px;font-size:18.46px"><span style="color:#DCDCAA">echo</span><span style="color:#FFFFFF"> </span><span style="color:#CE9178">&#x27;All Tests Passed!&#x27;</span><span style="color:#FFFFFF">;</span></div>
<div class="m" style="left:36.54px;top:561.56px;font-size:18.46px;color:#FFFFFF">45</div>
</div>
</body></html>
